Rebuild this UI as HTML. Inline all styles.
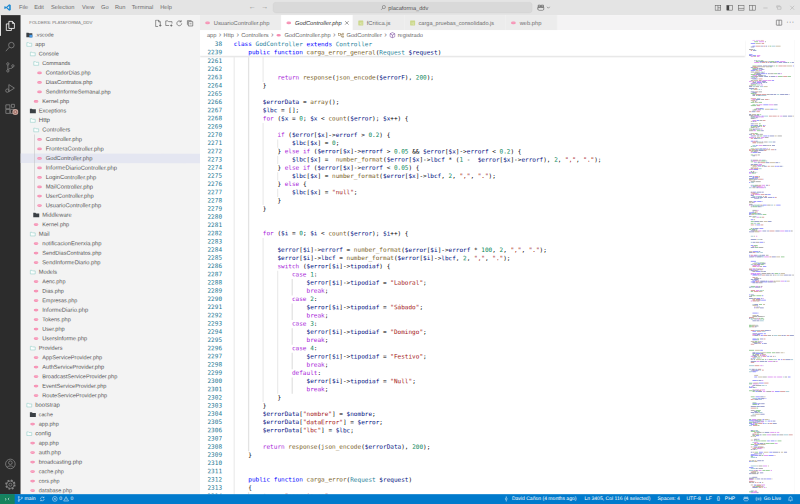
<!DOCTYPE html>
<html lang="en"><head><meta charset="utf-8"><title>GodController.php - placaforma_ddv - Visual Studio Code</title>
<style>
*{box-sizing:border-box}
html,body{margin:0;padding:0;width:800px;height:504px;overflow:hidden;background:#fff}
#root{position:absolute;left:0;top:0;width:1852px;height:1167px;transform:scale(0.43197);text-rendering:geometricPrecision;transform-origin:0 0;font-family:"Liberation Sans",sans-serif;font-size:13px;color:#333;background:#fff;overflow:hidden}
#root div,#root span,#root svg,#root b,#root i{position:absolute}
i{font-style:normal;position:static!important}
#title{left:0;top:0;width:100%;height:35px;background:#e4e4e4}
#title .m{top:9px;font-size:13.2px;color:#6c6c6c}
#cc{left:632px;top:5px;width:600px;height:25px;background:#d9d9d9;border:1px solid #cfcfcf;border-radius:6px}
#act{left:0;top:35px;width:48px;height:1110px;background:#2c2c2c}
#side{left:48px;top:35px;width:415px;height:1110px;background:#f3f3f3}
#side .hd{left:20px;top:12px;font-size:10px;color:#6b6b6b}
#tree{left:0;top:34.8px;width:100%;height:1080px}
.row{position:relative!important;height:21.980px;width:100%;display:block}
.row span{position:static!important;display:inline-block;line-height:22px;vertical-align:top;color:#555;font-size:13px;margin-left:21.800px}
.row .ic{width:16px;height:16px;top:3px}
.row.sel{background:#e4e6f1}
#tabs{left:463px;top:35px;width:1389px;height:35px;background:#f4f3f4}
.tab{top:0;height:35px;background:#ececec;border-right:1px solid #f3f3f3;font-size:13.3px;color:#6e6e6e;line-height:35px;white-space:nowrap}
.tab.act{background:#fff;color:#333;font-style:italic}
.tab .ic{width:16px;height:16px;top:10px;left:10px}
.tab span{left:32px;top:0}
#bc{left:463px;top:70px;width:1389px;height:22px;background:#fff;font-size:13.2px;color:#6a6a6a;line-height:22px;white-space:nowrap}
#bc span{top:0}
#ed{left:463px;top:92px;width:1389px;height:1053px;background:#fff;overflow:hidden;font-family:"DejaVu Sans Mono","Liberation Mono",monospace;font-size:14px}
#lines{left:0;top:41px;width:100%}
.sh{transform:matrix(1,0.00118,0,1,0,-0.45);transform-origin:0 0}
.ln{left:0;height:19px;width:100%;line-height:19px;white-space:pre}
.no{left:0;width:51px;text-align:right;color:#237893}
.tx{left:78px;color:#000}
.g{width:2.3px;background:#e3e3e3}
#sticky{left:0;top:0;width:1262px;height:38px;background:#fff;box-shadow:0 2px 3px -1px #ddd;border-bottom:1px solid #ececec}
.c{color:#008000}.u{color:#9aa0b5}.s{color:#a31515}.v{color:#001080}.n{color:#098658}.k{color:#0000ff}.t{color:#a71bd8}.l{color:#267f99}.f{color:#795e26}
.mm{left:1263px;top:0}
#status{left:0;top:1144px;width:100%;height:23px;background:#007acc;color:#fff;font-size:11.7px;line-height:22px;white-space:nowrap}
#status span{top:0}
#remote{left:0;top:0;width:34px;height:23px;background:#16825d}

#bc em{position:static;font-style:normal;display:inline-block}
#bc em.sep{margin:0 5px 0 5.500px;font-size:18px;color:#777;line-height:18px;position:relative;top:-1px}
#bc .bi{position:static!important;width:15px;height:15px;margin-right:5px}
</style></head>
<body>
<div id="root">
<div id="title"><svg style="left:9px;top:9px" width="17" height="17" viewBox="0 0 16 16"><path d="M11.5 1L5 7 2.2 4.9 1 5.5v5l1.2.6L5 9l6.5 6 3.5-1.5v-11zM11.5 4.8v6.4L7.3 8z" fill="#1f8ad2"/></svg><span class="m" style="left:44px">File</span><span class="m" style="left:79px">Edit</span><span class="m" style="left:118px">Selection</span><span class="m" style="left:190px">View</span><span class="m" style="left:234px">Go</span><span class="m" style="left:266px">Run</span><span class="m" style="left:305px">Terminal</span><span class="m" style="left:371px">Help</span><span class="m" style="left:575px;top:6px;font-size:17px;color:#8c8c8c">←</span><span class="m" style="left:604px;top:6px;font-size:17px;color:#8c8c8c">→</span><div id="cc"><svg style="left:248px;top:5px" width="13" height="13" viewBox="0 0 16 16"><circle cx="9.5" cy="6.5" r="4.5" fill="none" stroke="#555" stroke-width="1.3"/><path d="M6.3 9.7L1.5 14.5" stroke="#555" stroke-width="1.3"/></svg><span style="left:266px;top:4px;font-size:13px;color:#555">placaforma_ddv</span></div><svg style="left:1243px;top:9px" width="18" height="16" viewBox="0 0 18 16"><path d="M3 3h5v4H3zM10 3h5v4h-5zM2 8h14v5l-3 2H5l-3-2z" fill="none" stroke="#444" stroke-width="1.4"/></svg><svg style="left:1265px;top:14px" width="9" height="7" viewBox="0 0 9 7"><path d="M1 1.5l3.5 3.5L8 1.5" fill="none" stroke="#555" stroke-width="1.2"/></svg><svg style="left:1654px;top:10px" width="16" height="16" viewBox="0 0 16 16"><rect x="1.5" y="2.5" width="13" height="11" fill="none" stroke="#555" stroke-width="1.2"/><path d="M8 2.5v11M8 8h6.5" stroke="#555" stroke-width="1.2"/></svg><svg style="left:1681px;top:10px" width="16" height="16" viewBox="0 0 16 16"><rect x="1.5" y="2.5" width="13" height="11" fill="none" stroke="#555" stroke-width="1.2"/><rect x="1.5" y="2.5" width="5.5" height="11" fill="#444"/></svg><svg style="left:1708px;top:10px" width="16" height="16" viewBox="0 0 16 16"><rect x="1.5" y="2.5" width="13" height="11" fill="none" stroke="#555" stroke-width="1.2"/><path d="M1.5 9.5h13" stroke="#555" stroke-width="1.2"/></svg><svg style="left:1734px;top:10px" width="16" height="16" viewBox="0 0 16 16"><rect x="1.5" y="2.5" width="13" height="11" fill="none" stroke="#555" stroke-width="1.2"/><path d="M8 2.5v11" stroke="#555" stroke-width="1.2"/></svg><svg style="left:1764px;top:10px" width="16" height="16" viewBox="0 0 16 16"><path d="M3 8.5h10" stroke="#aaa" stroke-width="1.2"/></svg><svg style="left:1795px;top:10px" width="16" height="16" viewBox="0 0 16 16"><path d="M5 5.5h8v6H5zM3 8V3.5h8" fill="none" stroke="#aaa" stroke-width="1.2"/></svg><svg style="left:1826px;top:10px" width="16" height="16" viewBox="0 0 16 16"><path d="M3.5 3.5l9 9M12.5 3.5l-9 9" stroke="#aaa" stroke-width="1.2"/></svg></div>
<div id="act"><div style="left:0;top:0;width:2px;height:48px;background:#fff"></div><svg style="left:10px;top:11px" width="28" height="28" viewBox="0 0 24 24" fill="none" stroke="#fff" stroke-width="1.6"><path d="M9 3h7l4 4v10H9zM16 3v4h4"/><path d="M9 8H4v13h10v-4"/></svg><svg style="left:10px;top:59px" width="28" height="28" viewBox="0 0 24 24" fill="none" stroke="#858585" stroke-width="1.6"><circle cx="14" cy="9" r="5.5"/><path d="M10 13l-7 8"/></svg><svg style="left:10px;top:107px" width="28" height="28" viewBox="0 0 24 24" fill="none" stroke="#858585" stroke-width="1.6"><circle cx="7" cy="5" r="2.3"/><circle cx="7" cy="19" r="2.3"/><circle cx="17" cy="9" r="2.3"/><path d="M7 7.3v9.4M17 11.3c0 4-10 2-10 5.5"/></svg><svg style="left:10px;top:155px" width="28" height="28" viewBox="0 0 24 24" fill="none" stroke="#858585" stroke-width="1.6"><path d="M9 5l11 7-11 7z"/><circle cx="6" cy="17" r="3.3"/></svg><svg style="left:10px;top:203px" width="28" height="28" viewBox="0 0 24 24" fill="none" stroke="#858585" stroke-width="1.6"><path d="M3 4h8v8H3zM3 13h8v8H3zM12 13h8v8h-8z"/><path d="M14 3h6v6h-6z"/></svg><svg style="left:28px;top:217px" width="15" height="15" viewBox="0 0 15 15"><circle cx="7.5" cy="7.5" r="7" fill="#c9a79f"/><circle cx="7.5" cy="7.5" r="3.5" fill="none" stroke="#7a3b2c" stroke-width="1.2"/></svg><svg style="left:10px;top:1025px" width="28" height="28" viewBox="0 0 24 24" fill="none" stroke="#858585" stroke-width="1.6"><circle cx="12" cy="12" r="9.5"/><circle cx="12" cy="9.5" r="3.6"/><path d="M5.5 19c1-4 12-4 13 0"/></svg><svg style="left:10px;top:1073px" width="28" height="28" viewBox="0 0 24 24" fill="none" stroke="#858585" stroke-width="1.6"><circle cx="12" cy="12" r="3"/><circle cx="12" cy="12" r="8.600" stroke-width="3.400" stroke-dasharray="3.500 3.255"/><circle cx="12" cy="12" r="7.400"/></svg></div>
<div id="side"><span class="hd">FOLDERS: PLATAFORMA_DDV</span><svg style="left:309px;top:9.500px" width="18" height="18" viewBox="0 0 16 16" fill="none" stroke="#454545" stroke-width="1.150"><path d="M3 1.500h6l3.500 3.500v6M9 1.500v3.500h3.500M3 1.500v13h5M10 12.500h5M12.500 10v5"/></svg><svg style="left:334px;top:9.500px" width="18" height="18" viewBox="0 0 16 16" fill="none" stroke="#454545" stroke-width="1.150"><path d="M1.500 3h4.500l1.500 1.500h7v4M1.500 3v9.500h7M10.500 12.500h5M13 10v5"/></svg><svg style="left:358px;top:9.500px" width="18" height="18" viewBox="0 0 16 16" fill="none" stroke="#454545" stroke-width="1.150"><path d="M13 8a5 5 0 1 1-1.500-3.600M12 1.500v3.500H8.500"/></svg><svg style="left:383px;top:9.500px" width="18" height="18" viewBox="0 0 16 16" fill="none" stroke="#454545" stroke-width="1.150"><path d="M4.500 4.500h9v9h-9zM2.500 11V2.500H11M7 9h4"/></svg><div id="tree" class="sh"><div class="row" style="padding-left:12px"><svg class="ic" viewBox="0 0 16 16"><path d="M1 3h5l1.5 1.6H15V13.5H1z" fill="#3b4045"/><rect x="8" y="8" width="7" height="6.5" fill="#4a9be8"/></svg><span style="font-size:12.26px">.vscode</span></div>
<div class="row" style="padding-left:12px"><svg class="ic" viewBox="0 0 16 16"><path d="M2.200 4.200h3.800l1.300 1.400h6.200v7h-11.300z" fill="#fbfefd" stroke="#86c9c2" stroke-width="1.200" stroke-linejoin="round"/></svg><span style="font-size:13.18px">app</span></div>
<div class="row" style="padding-left:20px"><svg class="ic" viewBox="0 0 16 16"><path d="M2.200 4.200h3.800l1.300 1.400h6.200v7h-11.300z" fill="#fbfefd" stroke="#86c9c2" stroke-width="1.200" stroke-linejoin="round"/></svg><span style="font-size:12.62px">Console</span></div>
<div class="row" style="padding-left:28px"><svg class="ic" viewBox="0 0 16 16"><path d="M2.200 4.200h3.800l1.300 1.400h6.200v7h-11.300z" fill="#fbfefd" stroke="#86c9c2" stroke-width="1.200" stroke-linejoin="round"/></svg><span style="font-size:12.68px">Commands</span></div>
<div class="row" style="padding-left:36px"><svg class="ic" viewBox="0 0 16 16"><ellipse cx="7.500" cy="8.200" rx="5.400" ry="3.200" fill="#f68bb0"/><path d="M4.500 8h1.200M7 8h1.500M9.800 8H11" stroke="#fff" stroke-width="1"/></svg><span style="font-size:12.92px">ContadorDias.php</span></div>
<div class="row" style="padding-left:36px"><svg class="ic" viewBox="0 0 16 16"><ellipse cx="7.500" cy="8.200" rx="5.400" ry="3.200" fill="#f68bb0"/><path d="M4.500 8h1.200M7 8h1.500M9.800 8H11" stroke="#fff" stroke-width="1"/></svg><span style="font-size:13.07px">DiasContratos.php</span></div>
<div class="row" style="padding-left:36px"><svg class="ic" viewBox="0 0 16 16"><ellipse cx="7.500" cy="8.200" rx="5.400" ry="3.200" fill="#f68bb0"/><path d="M4.500 8h1.200M7 8h1.500M9.800 8H11" stroke="#fff" stroke-width="1"/></svg><span style="font-size:12.95px">SendInformeSemanal.php</span></div>
<div class="row" style="padding-left:28px"><svg class="ic" viewBox="0 0 16 16"><ellipse cx="7.500" cy="8.200" rx="5.400" ry="3.200" fill="#f68bb0"/><path d="M4.500 8h1.200M7 8h1.500M9.800 8H11" stroke="#fff" stroke-width="1"/></svg><span style="font-size:12.92px">Kernel.php</span></div>
<div class="row" style="padding-left:20px"><svg class="ic" viewBox="0 0 16 16"><path d="M1 3h5l1.5 1.6H15V13.5H1z" fill="#3b4045"/></svg><span style="font-size:13.01px">Exceptions</span></div>
<div class="row" style="padding-left:20px"><svg class="ic" viewBox="0 0 16 16"><path d="M2.200 4.200h3.800l1.300 1.400h6.200v7h-11.300z" fill="#fbfefd" stroke="#86c9c2" stroke-width="1.200" stroke-linejoin="round"/></svg><span style="font-size:14.20px">Http</span></div>
<div class="row" style="padding-left:28px"><svg class="ic" viewBox="0 0 16 16"><path d="M2.200 4.200h3.800l1.300 1.400h6.200v7h-11.300z" fill="#fbfefd" stroke="#86c9c2" stroke-width="1.200" stroke-linejoin="round"/></svg><span style="font-size:13.41px">Controllers</span></div>
<div class="row" style="padding-left:36px"><svg class="ic" viewBox="0 0 16 16"><ellipse cx="7.500" cy="8.200" rx="5.400" ry="3.200" fill="#f68bb0"/><path d="M4.500 8h1.200M7 8h1.500M9.800 8H11" stroke="#fff" stroke-width="1"/></svg><span style="font-size:13.48px">Controller.php</span></div>
<div class="row" style="padding-left:36px"><svg class="ic" viewBox="0 0 16 16"><ellipse cx="7.500" cy="8.200" rx="5.400" ry="3.200" fill="#f68bb0"/><path d="M4.500 8h1.200M7 8h1.500M9.800 8H11" stroke="#fff" stroke-width="1"/></svg><span style="font-size:13.42px">FronteraController.php</span></div>
<div class="row sel" style="padding-left:36px"><svg class="ic" viewBox="0 0 16 16"><ellipse cx="7.500" cy="8.200" rx="5.400" ry="3.200" fill="#f68bb0"/><path d="M4.500 8h1.200M7 8h1.500M9.800 8H11" stroke="#fff" stroke-width="1"/></svg><span style="font-size:13.33px">GodController.php</span></div>
<div class="row" style="padding-left:36px"><svg class="ic" viewBox="0 0 16 16"><ellipse cx="7.500" cy="8.200" rx="5.400" ry="3.200" fill="#f68bb0"/><path d="M4.500 8h1.200M7 8h1.500M9.800 8H11" stroke="#fff" stroke-width="1"/></svg><span style="font-size:13.49px">InformeDiarioController.php</span></div>
<div class="row" style="padding-left:36px"><svg class="ic" viewBox="0 0 16 16"><ellipse cx="7.500" cy="8.200" rx="5.400" ry="3.200" fill="#f68bb0"/><path d="M4.500 8h1.200M7 8h1.500M9.800 8H11" stroke="#fff" stroke-width="1"/></svg><span style="font-size:13.48px">LoginController.php</span></div>
<div class="row" style="padding-left:36px"><svg class="ic" viewBox="0 0 16 16"><ellipse cx="7.500" cy="8.200" rx="5.400" ry="3.200" fill="#f68bb0"/><path d="M4.500 8h1.200M7 8h1.500M9.800 8H11" stroke="#fff" stroke-width="1"/></svg><span style="font-size:13.57px">MailController.php</span></div>
<div class="row" style="padding-left:36px"><svg class="ic" viewBox="0 0 16 16"><ellipse cx="7.500" cy="8.200" rx="5.400" ry="3.200" fill="#f68bb0"/><path d="M4.500 8h1.200M7 8h1.500M9.800 8H11" stroke="#fff" stroke-width="1"/></svg><span style="font-size:13.33px">UserController.php</span></div>
<div class="row" style="padding-left:36px"><svg class="ic" viewBox="0 0 16 16"><ellipse cx="7.500" cy="8.200" rx="5.400" ry="3.200" fill="#f68bb0"/><path d="M4.500 8h1.200M7 8h1.500M9.800 8H11" stroke="#fff" stroke-width="1"/></svg><span style="font-size:13.28px">UsuarioController.php</span></div>
<div class="row" style="padding-left:28px"><svg class="ic" viewBox="0 0 16 16"><path d="M1 3h5l1.5 1.6H15V13.5H1z" fill="#3b4045"/></svg><span style="font-size:13.36px">Middleware</span></div>
<div class="row" style="padding-left:28px"><svg class="ic" viewBox="0 0 16 16"><ellipse cx="7.500" cy="8.200" rx="5.400" ry="3.200" fill="#f68bb0"/><path d="M4.500 8h1.200M7 8h1.500M9.800 8H11" stroke="#fff" stroke-width="1"/></svg><span style="font-size:12.92px">Kernel.php</span></div>
<div class="row" style="padding-left:20px"><svg class="ic" viewBox="0 0 16 16"><path d="M2.200 4.200h3.800l1.300 1.400h6.200v7h-11.300z" fill="#fbfefd" stroke="#86c9c2" stroke-width="1.200" stroke-linejoin="round"/></svg><span style="font-size:13.57px">Mail</span></div>
<div class="row" style="padding-left:28px"><svg class="ic" viewBox="0 0 16 16"><ellipse cx="7.500" cy="8.200" rx="5.400" ry="3.200" fill="#f68bb0"/><path d="M4.500 8h1.200M7 8h1.500M9.800 8H11" stroke="#fff" stroke-width="1"/></svg><span style="font-size:13.27px">notificacionEnerxia.php</span></div>
<div class="row" style="padding-left:28px"><svg class="ic" viewBox="0 0 16 16"><ellipse cx="7.500" cy="8.200" rx="5.400" ry="3.200" fill="#f68bb0"/><path d="M4.500 8h1.200M7 8h1.500M9.800 8H11" stroke="#fff" stroke-width="1"/></svg><span style="font-size:12.92px">SendDiasContratos.php</span></div>
<div class="row" style="padding-left:28px"><svg class="ic" viewBox="0 0 16 16"><ellipse cx="7.500" cy="8.200" rx="5.400" ry="3.200" fill="#f68bb0"/><path d="M4.500 8h1.200M7 8h1.500M9.800 8H11" stroke="#fff" stroke-width="1"/></svg><span style="font-size:13.11px">SendInformeDiario.php</span></div>
<div class="row" style="padding-left:20px"><svg class="ic" viewBox="0 0 16 16"><path d="M2.200 4.200h3.800l1.300 1.400h6.200v7h-11.300z" fill="#fbfefd" stroke="#86c9c2" stroke-width="1.200" stroke-linejoin="round"/></svg><span style="font-size:13.11px">Models</span></div>
<div class="row" style="padding-left:28px"><svg class="ic" viewBox="0 0 16 16"><ellipse cx="7.500" cy="8.200" rx="5.400" ry="3.200" fill="#f68bb0"/><path d="M4.500 8h1.200M7 8h1.500M9.800 8H11" stroke="#fff" stroke-width="1"/></svg><span style="font-size:12.74px">Aenc.php</span></div>
<div class="row" style="padding-left:28px"><svg class="ic" viewBox="0 0 16 16"><ellipse cx="7.500" cy="8.200" rx="5.400" ry="3.200" fill="#f68bb0"/><path d="M4.500 8h1.200M7 8h1.500M9.800 8H11" stroke="#fff" stroke-width="1"/></svg><span style="font-size:12.61px">Dias.php</span></div>
<div class="row" style="padding-left:28px"><svg class="ic" viewBox="0 0 16 16"><ellipse cx="7.500" cy="8.200" rx="5.400" ry="3.200" fill="#f68bb0"/><path d="M4.500 8h1.200M7 8h1.500M9.800 8H11" stroke="#fff" stroke-width="1"/></svg><span style="font-size:12.57px">Empresas.php</span></div>
<div class="row" style="padding-left:28px"><svg class="ic" viewBox="0 0 16 16"><ellipse cx="7.500" cy="8.200" rx="5.400" ry="3.200" fill="#f68bb0"/><path d="M4.500 8h1.200M7 8h1.500M9.800 8H11" stroke="#fff" stroke-width="1"/></svg><span style="font-size:13.40px">InformeDiario.php</span></div>
<div class="row" style="padding-left:28px"><svg class="ic" viewBox="0 0 16 16"><ellipse cx="7.500" cy="8.200" rx="5.400" ry="3.200" fill="#f68bb0"/><path d="M4.500 8h1.200M7 8h1.500M9.800 8H11" stroke="#fff" stroke-width="1"/></svg><span style="font-size:12.90px">Tokens.php</span></div>
<div class="row" style="padding-left:28px"><svg class="ic" viewBox="0 0 16 16"><ellipse cx="7.500" cy="8.200" rx="5.400" ry="3.200" fill="#f68bb0"/><path d="M4.500 8h1.200M7 8h1.500M9.800 8H11" stroke="#fff" stroke-width="1"/></svg><span style="font-size:13.01px">User.php</span></div>
<div class="row" style="padding-left:28px"><svg class="ic" viewBox="0 0 16 16"><ellipse cx="7.500" cy="8.200" rx="5.400" ry="3.200" fill="#f68bb0"/><path d="M4.500 8h1.200M7 8h1.500M9.800 8H11" stroke="#fff" stroke-width="1"/></svg><span style="font-size:13.11px">UsersInforme.php</span></div>
<div class="row" style="padding-left:20px"><svg class="ic" viewBox="0 0 16 16"><path d="M2.200 4.200h3.800l1.300 1.400h6.200v7h-11.300z" fill="#fbfefd" stroke="#86c9c2" stroke-width="1.200" stroke-linejoin="round"/></svg><span style="font-size:13.02px">Providers</span></div>
<div class="row" style="padding-left:28px"><svg class="ic" viewBox="0 0 16 16"><ellipse cx="7.500" cy="8.200" rx="5.400" ry="3.200" fill="#f68bb0"/><path d="M4.500 8h1.200M7 8h1.500M9.800 8H11" stroke="#fff" stroke-width="1"/></svg><span style="font-size:12.95px">AppServiceProvider.php</span></div>
<div class="row" style="padding-left:28px"><svg class="ic" viewBox="0 0 16 16"><ellipse cx="7.500" cy="8.200" rx="5.400" ry="3.200" fill="#f68bb0"/><path d="M4.500 8h1.200M7 8h1.500M9.800 8H11" stroke="#fff" stroke-width="1"/></svg><span style="font-size:13.04px">AuthServiceProvider.php</span></div>
<div class="row" style="padding-left:28px"><svg class="ic" viewBox="0 0 16 16"><ellipse cx="7.500" cy="8.200" rx="5.400" ry="3.200" fill="#f68bb0"/><path d="M4.500 8h1.200M7 8h1.500M9.800 8H11" stroke="#fff" stroke-width="1"/></svg><span style="font-size:12.91px">BroadcastServiceProvider.php</span></div>
<div class="row" style="padding-left:28px"><svg class="ic" viewBox="0 0 16 16"><ellipse cx="7.500" cy="8.200" rx="5.400" ry="3.200" fill="#f68bb0"/><path d="M4.500 8h1.200M7 8h1.500M9.800 8H11" stroke="#fff" stroke-width="1"/></svg><span style="font-size:12.93px">EventServiceProvider.php</span></div>
<div class="row" style="padding-left:28px"><svg class="ic" viewBox="0 0 16 16"><ellipse cx="7.500" cy="8.200" rx="5.400" ry="3.200" fill="#f68bb0"/><path d="M4.500 8h1.200M7 8h1.500M9.800 8H11" stroke="#fff" stroke-width="1"/></svg><span style="font-size:12.95px">RouteServiceProvider.php</span></div>
<div class="row" style="padding-left:12px"><svg class="ic" viewBox="0 0 16 16"><path d="M2.200 4.200h3.800l1.300 1.400h6.200v7h-11.300z" fill="#fbfefd" stroke="#86c9c2" stroke-width="1.200" stroke-linejoin="round"/></svg><span style="font-size:13.60px">bootstrap</span></div>
<div class="row" style="padding-left:20px"><svg class="ic" viewBox="0 0 16 16"><path d="M1 3h5l1.5 1.6H15V13.5H1z" fill="#3b4045"/></svg><span style="font-size:12.20px">cache</span></div>
<div class="row" style="padding-left:20px"><svg class="ic" viewBox="0 0 16 16"><ellipse cx="7.500" cy="8.200" rx="5.400" ry="3.200" fill="#f68bb0"/><path d="M4.500 8h1.200M7 8h1.500M9.800 8H11" stroke="#fff" stroke-width="1"/></svg><span style="font-size:12.81px">app.php</span></div>
<div class="row" style="padding-left:12px"><svg class="ic" viewBox="0 0 16 16"><path d="M2.200 4.200h3.800l1.300 1.400h6.200v7h-11.300z" fill="#fbfefd" stroke="#86c9c2" stroke-width="1.200" stroke-linejoin="round"/></svg><span style="font-size:13.66px">config</span></div>
<div class="row" style="padding-left:20px"><svg class="ic" viewBox="0 0 16 16"><ellipse cx="7.500" cy="8.200" rx="5.400" ry="3.200" fill="#f68bb0"/><path d="M4.500 8h1.200M7 8h1.500M9.800 8H11" stroke="#fff" stroke-width="1"/></svg><span style="font-size:12.81px">app.php</span></div>
<div class="row" style="padding-left:20px"><svg class="ic" viewBox="0 0 16 16"><ellipse cx="7.500" cy="8.200" rx="5.400" ry="3.200" fill="#f68bb0"/><path d="M4.500 8h1.200M7 8h1.500M9.800 8H11" stroke="#fff" stroke-width="1"/></svg><span style="font-size:13.08px">auth.php</span></div>
<div class="row" style="padding-left:20px"><svg class="ic" viewBox="0 0 16 16"><ellipse cx="7.500" cy="8.200" rx="5.400" ry="3.200" fill="#f68bb0"/><path d="M4.500 8h1.200M7 8h1.500M9.800 8H11" stroke="#fff" stroke-width="1"/></svg><span style="font-size:13.05px">broadcasting.php</span></div>
<div class="row" style="padding-left:20px"><svg class="ic" viewBox="0 0 16 16"><ellipse cx="7.500" cy="8.200" rx="5.400" ry="3.200" fill="#f68bb0"/><path d="M4.500 8h1.200M7 8h1.500M9.800 8H11" stroke="#fff" stroke-width="1"/></svg><span style="font-size:12.54px">cache.php</span></div>
<div class="row" style="padding-left:20px"><svg class="ic" viewBox="0 0 16 16"><ellipse cx="7.500" cy="8.200" rx="5.400" ry="3.200" fill="#f68bb0"/><path d="M4.500 8h1.200M7 8h1.500M9.800 8H11" stroke="#fff" stroke-width="1"/></svg><span style="font-size:12.52px">cors.php</span></div>
<div class="row" style="padding-left:20px"><svg class="ic" viewBox="0 0 16 16"><ellipse cx="7.500" cy="8.200" rx="5.400" ry="3.200" fill="#f68bb0"/><path d="M4.500 8h1.200M7 8h1.500M9.800 8H11" stroke="#fff" stroke-width="1"/></svg><span style="font-size:12.70px">database.php</span></div>
<div class="row" style="padding-left:20px"><svg class="ic" viewBox="0 0 16 16"><ellipse cx="7.500" cy="8.200" rx="5.400" ry="3.200" fill="#f68bb0"/><path d="M4.500 8h1.200M7 8h1.500M9.800 8H11" stroke="#fff" stroke-width="1"/></svg><span style="font-size:13.00px">filesystems.php</span></div><div style="left:30.800px;top:241.8px;width:1.200px;height:175.8px;background:#b4b4b4"></div></div></div>
<div id="tabs"><div class="tab" style="left:0px;width:188px"><svg class="ic" viewBox="0 0 16 16"><ellipse cx="7.500" cy="8.200" rx="5.400" ry="3.200" fill="#f68bb0"/><path d="M4.500 8h1.200M7 8h1.500M9.800 8H11" stroke="#fff" stroke-width="1"/></svg><span>UsuarioController.php</span></div><div class="tab act" style="left:188px;width:166px"><svg class="ic" viewBox="0 0 16 16"><ellipse cx="7.500" cy="8.200" rx="5.400" ry="3.200" fill="#f68bb0"/><path d="M4.500 8h1.200M7 8h1.500M9.800 8H11" stroke="#fff" stroke-width="1"/></svg><span>GodController.php</span><svg style="left:145px;top:11px" width="14" height="14" viewBox="0 0 14 14"><path d="M3 3l8 8M11 3l-8 8" stroke="#444" stroke-width="1.2"/></svg></div><div class="tab" style="left:354px;width:120px"><svg class="ic" viewBox="0 0 16 16"><rect x="2.500" y="2.500" width="11.500" height="11.500" rx="1" fill="#cbd78a"/><path d="M7 7v4.500M9.500 8h2.500M9.500 11h2.500" stroke="#f7f9e6" stroke-width="1.200"/></svg><span>fCritica.js</span></div><div class="tab" style="left:474px;width:234px"><svg class="ic" viewBox="0 0 16 16"><rect x="2.500" y="2.500" width="11.500" height="11.500" rx="1" fill="#cbd78a"/><path d="M7 7v4.500M9.500 8h2.500M9.500 11h2.500" stroke="#f7f9e6" stroke-width="1.200"/></svg><span style="font-size:12.900px">carga_pruebas_consolidado.js</span></div><div class="tab" style="left:708px;width:119px"><svg class="ic" viewBox="0 0 16 16"><ellipse cx="7.500" cy="8.200" rx="5.400" ry="3.200" fill="#f68bb0"/><path d="M4.500 8h1.200M7 8h1.500M9.800 8H11" stroke="#fff" stroke-width="1"/></svg><span>web.php</span></div><svg style="left:1332px;top:9px" width="17" height="17" viewBox="0 0 16 16"><rect x="2" y="2.500" width="12" height="11" rx="1" fill="none" stroke="#444" stroke-width="1.200"/><path d="M8 2.500v11" stroke="#444" stroke-width="1.200"/></svg><span style="left:1357px;top:8px;font-size:16px;color:#444;letter-spacing:1px;line-height:16px">···</span></div>
<div id="bc"><div style="left:16px;top:0;display:flex;align-items:center;height:22px;position:absolute"><em>app</em><em class="sep">›</em><em>Http</em><em class="sep">›</em><em>Controllers</em><em class="sep">›</em><svg class="bi" viewBox="0 0 16 16"><ellipse cx="7.500" cy="8.200" rx="5.400" ry="3.200" fill="#f68bb0"/></svg><em>GodController.php</em><em class="sep">›</em><svg class="bi" viewBox="0 0 16 16" fill="none" stroke="#8a6d3b" stroke-width="1.2"><rect x="1.500" y="4" width="5" height="5"/><path d="M6.500 6.500h4M10.500 3.500h4v3h-4zM10.500 10h4v3h-4zM8.500 6.500v5h2"/></svg><em>GodController</em><em class="sep">›</em><svg class="bi" viewBox="0 0 16 16" fill="none" stroke="#652d90" stroke-width="1.2"><path d="M8 1.500l6 3v7l-6 3-6-3v-7zM2 4.500l6 3 6-3M8 7.500v7"/></svg><em>registrado</em></div></div>
<div id="ed"><div id="lines" class="sh"><div class="ln" style="top:0px"><span class="no">2261</span><span class="tx"></span></div>
<div class="ln" style="top:19px"><span class="no">2262</span><span class="tx"></span></div>
<div class="ln" style="top:38px"><span class="no">2263</span><span class="tx">            <i class="t">return</i> <i class="f">response</i>(<i class="f">json_encode</i>(<i class="v">$errorF</i>), <i class="n">200</i>);</span></div>
<div class="ln" style="top:57px"><span class="no">2264</span><span class="tx">        }</span></div>
<div class="ln" style="top:76px"><span class="no">2265</span><span class="tx"></span></div>
<div class="ln" style="top:95px"><span class="no">2266</span><span class="tx">        <i class="v">$errorData</i> = <i class="f">array</i>();</span></div>
<div class="ln" style="top:114px"><span class="no">2267</span><span class="tx">        <i class="v">$lbc</i> = [];</span></div>
<div class="ln" style="top:133px"><span class="no">2268</span><span class="tx">        <i class="t">for</i> (<i class="v">$x</i> = <i class="n">0</i>; <i class="v">$x</i> &lt; <i class="f">count</i>(<i class="v">$error</i>); <i class="v">$x</i>++) {</span></div>
<div class="ln" style="top:152px"><span class="no">2269</span><span class="tx"></span></div>
<div class="ln" style="top:171px"><span class="no">2270</span><span class="tx">            <i class="t">if</i> (<i class="v">$error</i>[<i class="v">$x</i>]-&gt;<i class="v">errorf</i> &gt; <i class="n">0.2</i>) {</span></div>
<div class="ln" style="top:190px"><span class="no">2271</span><span class="tx">                <i class="v">$lbc</i>[<i class="v">$x</i>] = <i class="n">0</i>;</span></div>
<div class="ln" style="top:209px"><span class="no">2272</span><span class="tx">            } <i class="t">else</i> <i class="t">if</i> (<i class="v">$error</i>[<i class="v">$x</i>]-&gt;<i class="v">errorf</i> &gt; <i class="n">0.05</i> &amp;&amp; <i class="v">$error</i>[<i class="v">$x</i>]-&gt;<i class="v">errorf</i> &lt; <i class="n">0.2</i>) {</span></div>
<div class="ln" style="top:228px"><span class="no">2273</span><span class="tx">                <i class="v">$lbc</i>[<i class="v">$x</i>] =  <i class="f">number_format</i>(<i class="v">$error</i>[<i class="v">$x</i>]-&gt;<i class="v">lbcf</i> * (<i class="n">1</i> -  <i class="v">$error</i>[<i class="v">$x</i>]-&gt;<i class="v">errorf</i>), <i class="n">2</i>, <i class="s">","</i>, <i class="s">"."</i>);</span></div>
<div class="ln" style="top:247px"><span class="no">2274</span><span class="tx">            } <i class="t">else</i> <i class="t">if</i> (<i class="v">$error</i>[<i class="v">$x</i>]-&gt;<i class="v">errorf</i> &lt; <i class="n">0.05</i>) {</span></div>
<div class="ln" style="top:266px"><span class="no">2275</span><span class="tx">                <i class="v">$lbc</i>[<i class="v">$x</i>] = <i class="f">number_format</i>(<i class="v">$error</i>[<i class="v">$x</i>]-&gt;<i class="v">lbcf</i>, <i class="n">2</i>, <i class="s">","</i>, <i class="s">"."</i>);</span></div>
<div class="ln" style="top:285px"><span class="no">2276</span><span class="tx">            } <i class="t">else</i> {</span></div>
<div class="ln" style="top:304px"><span class="no">2277</span><span class="tx">                <i class="v">$lbc</i>[<i class="v">$x</i>] = <i class="s">"null"</i>;</span></div>
<div class="ln" style="top:323px"><span class="no">2278</span><span class="tx">            }</span></div>
<div class="ln" style="top:342px"><span class="no">2279</span><span class="tx">        }</span></div>
<div class="ln" style="top:361px"><span class="no">2280</span><span class="tx"></span></div>
<div class="ln" style="top:380px"><span class="no">2281</span><span class="tx"></span></div>
<div class="ln" style="top:399px"><span class="no">2282</span><span class="tx">        <i class="t">for</i> (<i class="v">$i</i> = <i class="n">0</i>; <i class="v">$i</i> &lt; <i class="f">count</i>(<i class="v">$error</i>); <i class="v">$i</i>++) {</span></div>
<div class="ln" style="top:418px"><span class="no">2283</span><span class="tx"></span></div>
<div class="ln" style="top:437px"><span class="no">2284</span><span class="tx">            <i class="v">$error</i>[<i class="v">$i</i>]-&gt;<i class="v">errorf</i> = <i class="f">number_format</i>(<i class="v">$error</i>[<i class="v">$i</i>]-&gt;<i class="v">errorf</i> * <i class="n">100</i>, <i class="n">2</i>, <i class="s">","</i>, <i class="s">"."</i>);</span></div>
<div class="ln" style="top:456px"><span class="no">2285</span><span class="tx">            <i class="v">$error</i>[<i class="v">$i</i>]-&gt;<i class="v">lbcf</i> = <i class="f">number_format</i>(<i class="v">$error</i>[<i class="v">$i</i>]-&gt;<i class="v">lbcf</i>, <i class="n">2</i>, <i class="s">","</i>, <i class="s">"."</i>);</span></div>
<div class="ln" style="top:475px"><span class="no">2286</span><span class="tx">            <i class="t">switch</i> (<i class="v">$error</i>[<i class="v">$i</i>]-&gt;<i class="v">tipodiaf</i>) {</span></div>
<div class="ln" style="top:494px"><span class="no">2287</span><span class="tx">                <i class="t">case</i> <i class="n">1</i>:</span></div>
<div class="ln" style="top:513px"><span class="no">2288</span><span class="tx">                    <i class="v">$error</i>[<i class="v">$i</i>]-&gt;<i class="v">tipodiaf</i> = <i class="s">"Laboral"</i>;</span></div>
<div class="ln" style="top:532px"><span class="no">2289</span><span class="tx">                    <i class="t">break</i>;</span></div>
<div class="ln" style="top:551px"><span class="no">2290</span><span class="tx">                <i class="t">case</i> <i class="n">2</i>:</span></div>
<div class="ln" style="top:570px"><span class="no">2291</span><span class="tx">                    <i class="v">$error</i>[<i class="v">$i</i>]-&gt;<i class="v">tipodiaf</i> = <i class="s">"Sábado"</i>;</span></div>
<div class="ln" style="top:589px"><span class="no">2292</span><span class="tx">                    <i class="t">break</i>;</span></div>
<div class="ln" style="top:608px"><span class="no">2293</span><span class="tx">                <i class="t">case</i> <i class="n">3</i>:</span></div>
<div class="ln" style="top:627px"><span class="no">2294</span><span class="tx">                    <i class="v">$error</i>[<i class="v">$i</i>]-&gt;<i class="v">tipodiaf</i> = <i class="s">"Domingo"</i>;</span></div>
<div class="ln" style="top:646px"><span class="no">2295</span><span class="tx">                    <i class="t">break</i>;</span></div>
<div class="ln" style="top:665px"><span class="no">2296</span><span class="tx">                <i class="t">case</i> <i class="n">4</i>:</span></div>
<div class="ln" style="top:684px"><span class="no">2297</span><span class="tx">                    <i class="v">$error</i>[<i class="v">$i</i>]-&gt;<i class="v">tipodiaf</i> = <i class="s">"Festivo"</i>;</span></div>
<div class="ln" style="top:703px"><span class="no">2298</span><span class="tx">                    <i class="t">break</i>;</span></div>
<div class="ln" style="top:722px"><span class="no">2299</span><span class="tx">                <i class="t">default</i>:</span></div>
<div class="ln" style="top:741px"><span class="no">2300</span><span class="tx">                    <i class="v">$error</i>[<i class="v">$i</i>]-&gt;<i class="v">tipodiaf</i> = <i class="s">"Null"</i>;</span></div>
<div class="ln" style="top:760px"><span class="no">2301</span><span class="tx">                    <i class="t">break</i>;</span></div>
<div class="ln" style="top:779px"><span class="no">2302</span><span class="tx">            }</span></div>
<div class="ln" style="top:798px"><span class="no">2303</span><span class="tx">        }</span></div>
<div class="ln" style="top:817px"><span class="no">2304</span><span class="tx">        <i class="v">$errorData</i>[<i class="s">"nombre"</i>] = <i class="v">$nombre</i>;</span></div>
<div class="ln" style="top:836px"><span class="no">2305</span><span class="tx">        <i class="v">$errorData</i>[<i class="s">"dataError"</i>] = <i class="v">$error</i>;</span></div>
<div class="ln" style="top:855px"><span class="no">2306</span><span class="tx">        <i class="v">$errorData</i>[<i class="s">"lbc"</i>] = <i class="v">$lbc</i>;</span></div>
<div class="ln" style="top:874px"><span class="no">2307</span><span class="tx"></span></div>
<div class="ln" style="top:893px"><span class="no">2308</span><span class="tx">        <i class="t">return</i> <i class="f">response</i>(<i class="f">json_encode</i>(<i class="v">$errorData</i>), <i class="n">200</i>);</span></div>
<div class="ln" style="top:912px"><span class="no">2309</span><span class="tx">    }</span></div>
<div class="ln" style="top:931px"><span class="no">2310</span><span class="tx"></span></div>
<div class="ln" style="top:950px"><span class="no">2311</span><span class="tx"></span></div>
<div class="ln" style="top:969px"><span class="no">2312</span><span class="tx">    <i class="k">public</i> <i class="k">function</i> <i class="f">carga_error</i>(<i class="l">Request</i> <i class="v">$request</i>)</span></div>
<div class="ln" style="top:988px"><span class="no">2313</span><span class="tx">    {</span></div>
<div class="ln" style="top:1007px"><span class="no">2314</span><span class="tx">        <i class="u">$ep</i> = <i class="s">"energia_sp"</i>;</span></div>
<b class="g" style="left:77.50px;top:0px;height:1026px"></b>
<b class="g" style="left:111.21px;top:0px;height:912px"></b>
<b class="g" style="left:111.21px;top:1007px;height:19px"></b>
<b class="g" style="left:144.93px;top:0px;height:57px"></b>
<b class="g" style="left:144.93px;top:152px;height:190px"></b>
<b class="g" style="left:144.93px;top:418px;height:380px"></b>
<b class="g" style="left:178.64px;top:190px;height:19px"></b>
<b class="g" style="left:178.64px;top:228px;height:19px"></b>
<b class="g" style="left:178.64px;top:266px;height:19px"></b>
<b class="g" style="left:178.64px;top:304px;height:19px"></b>
<b class="g" style="left:178.64px;top:494px;height:285px"></b>
<b class="g" style="left:212.36px;top:513px;height:38px"></b>
<b class="g" style="left:212.36px;top:570px;height:38px"></b>
<b class="g" style="left:212.36px;top:627px;height:38px"></b>
<b class="g" style="left:212.36px;top:684px;height:38px"></b>
<b class="g" style="left:212.36px;top:741px;height:38px"></b></div><svg class="mm" width="112" height="1053" viewBox="0 0 112 1053" opacity=".58"><rect x="16" y="0" width="6" height="1.5" fill="#af00db"/><rect x="24" y="0" width="10" height="1.5" fill="#af00db"/><rect x="35" y="0" width="7" height="1.5" fill="#a31515"/><rect x="20" y="4" width="9" height="1.5" fill="#008000"/><rect x="31" y="4" width="12" height="1.5" fill="#af00db"/><rect x="45" y="4" width="2" height="1.5" fill="#333"/><rect x="12" y="8" width="10" height="1.5" fill="#0000ff"/><rect x="23" y="8" width="12" height="1.5" fill="#795e26"/><rect x="37" y="8" width="6" height="1.5" fill="#a31515"/><rect x="16" y="14" width="7" height="1.5" fill="#0000ff"/><rect x="24" y="14" width="11" height="1.5" fill="#a31515"/><rect x="36" y="14" width="4" height="1.5" fill="#001080"/><rect x="41" y="14" width="4" height="1.5" fill="#a31515"/><rect x="46" y="14" width="4" height="1.5" fill="#001080"/><rect x="52" y="14" width="3" height="1.5" fill="#795e26"/><rect x="56" y="14" width="3" height="1.5" fill="#008000"/><rect x="60" y="14" width="9" height="1.5" fill="#267f99"/><rect x="70" y="14" width="11" height="1.5" fill="#795e26"/><rect x="12" y="16" width="8" height="1.5" fill="#001080"/><rect x="8" y="22" width="10" height="1.5" fill="#333"/><rect x="19" y="22" width="3" height="1.5" fill="#267f99"/><rect x="12" y="24" width="3" height="1.5" fill="#a31515"/><rect x="17" y="24" width="7" height="1.5" fill="#001080"/><rect x="25" y="24" width="1" height="1.5" fill="#267f99"/><rect x="8" y="34" width="8" height="1.5" fill="#0000ff"/><rect x="8" y="36" width="6" height="1.5" fill="#001080"/><rect x="16" y="36" width="8" height="1.5" fill="#0000ff"/><rect x="26" y="36" width="8" height="1.5" fill="#af00db"/><rect x="12" y="38" width="5" height="1.5" fill="#af00db"/><rect x="18" y="38" width="6" height="1.5" fill="#795e26"/><rect x="26" y="38" width="6" height="1.5" fill="#af00db"/><rect x="20" y="48" width="3" height="1.5" fill="#001080"/><rect x="24" y="48" width="3" height="1.5" fill="#333"/><rect x="28" y="48" width="6" height="1.5" fill="#267f99"/><rect x="35" y="48" width="6" height="1.5" fill="#008000"/><rect x="24" y="50" width="6" height="1.5" fill="#008000"/><rect x="32" y="50" width="12" height="1.5" fill="#001080"/><rect x="45" y="50" width="6" height="1.5" fill="#795e26"/><rect x="53" y="50" width="3" height="1.5" fill="#001080"/><rect x="57" y="50" width="9" height="1.5" fill="#008000"/><rect x="67" y="50" width="3" height="1.5" fill="#001080"/><rect x="71" y="50" width="7" height="1.5" fill="#0000ff"/><rect x="80" y="50" width="12" height="1.5" fill="#af00db"/><rect x="20" y="52" width="12" height="1.5" fill="#af00db"/><rect x="34" y="52" width="3" height="1.5" fill="#001080"/><rect x="38" y="52" width="8" height="1.5" fill="#a31515"/><rect x="47" y="52" width="3" height="1.5" fill="#001080"/><rect x="51" y="52" width="4" height="1.5" fill="#a31515"/><rect x="56" y="52" width="5" height="1.5" fill="#001080"/><rect x="62" y="52" width="10" height="1.5" fill="#333"/><rect x="73" y="52" width="3" height="1.5" fill="#af00db"/><rect x="77" y="52" width="8" height="1.5" fill="#001080"/><rect x="87" y="52" width="10" height="1.5" fill="#001080"/><rect x="98" y="52" width="3" height="1.5" fill="#008000"/><rect x="103" y="52" width="3" height="1.5" fill="#267f99"/><rect x="107" y="52" width="6" height="1.5" fill="#001080"/><rect x="16" y="60" width="10" height="1.5" fill="#008000"/><rect x="27" y="60" width="11" height="1.5" fill="#001080"/><rect x="40" y="60" width="11" height="1.5" fill="#001080"/><rect x="52" y="60" width="12" height="1.5" fill="#001080"/><rect x="65" y="60" width="3" height="1.5" fill="#795e26"/><rect x="70" y="60" width="4" height="1.5" fill="#008000"/><rect x="76" y="60" width="10" height="1.5" fill="#a31515"/><rect x="87" y="60" width="8" height="1.5" fill="#a31515"/><rect x="96" y="60" width="12" height="1.5" fill="#795e26"/><rect x="110" y="60" width="3" height="1.5" fill="#0000ff"/><rect x="16" y="62" width="9" height="1.5" fill="#a31515"/><rect x="26" y="62" width="9" height="1.5" fill="#795e26"/><rect x="36" y="62" width="9" height="1.5" fill="#795e26"/><rect x="47" y="62" width="8" height="1.5" fill="#795e26"/><rect x="56" y="62" width="5" height="1.5" fill="#008000"/><rect x="12" y="64" width="5" height="1.5" fill="#001080"/><rect x="18" y="64" width="10" height="1.5" fill="#a31515"/><rect x="16" y="66" width="8" height="1.5" fill="#008000"/><rect x="25" y="66" width="4" height="1.5" fill="#001080"/><rect x="30" y="66" width="9" height="1.5" fill="#001080"/><rect x="16" y="68" width="12" height="1.5" fill="#001080"/><rect x="30" y="68" width="5" height="1.5" fill="#267f99"/><rect x="36" y="68" width="6" height="1.5" fill="#001080"/><rect x="43" y="68" width="1" height="1.5" fill="#af00db"/><rect x="12" y="70" width="11" height="1.5" fill="#0000ff"/><rect x="24" y="70" width="6" height="1.5" fill="#795e26"/><rect x="31" y="70" width="7" height="1.5" fill="#af00db"/><rect x="12" y="74" width="8" height="1.5" fill="#333"/><rect x="22" y="74" width="11" height="1.5" fill="#333"/><rect x="35" y="74" width="5" height="1.5" fill="#267f99"/><rect x="42" y="74" width="2" height="1.5" fill="#001080"/><rect x="20" y="76" width="10" height="1.5" fill="#795e26"/><rect x="32" y="76" width="3" height="1.5" fill="#267f99"/><rect x="37" y="76" width="5" height="1.5" fill="#333"/><rect x="20" y="78" width="4" height="1.5" fill="#795e26"/><rect x="25" y="78" width="9" height="1.5" fill="#001080"/><rect x="35" y="78" width="11" height="1.5" fill="#0000ff"/><rect x="47" y="78" width="3" height="1.5" fill="#0000ff"/><rect x="52" y="78" width="4" height="1.5" fill="#001080"/><rect x="57" y="78" width="8" height="1.5" fill="#333"/><rect x="66" y="78" width="7" height="1.5" fill="#008000"/><rect x="74" y="78" width="6" height="1.5" fill="#001080"/><rect x="81" y="78" width="3" height="1.5" fill="#af00db"/><rect x="12" y="80" width="11" height="1.5" fill="#008000"/><rect x="24" y="80" width="12" height="1.5" fill="#001080"/><rect x="16" y="82" width="11" height="1.5" fill="#af00db"/><rect x="29" y="82" width="11" height="1.5" fill="#333"/><rect x="41" y="82" width="6" height="1.5" fill="#267f99"/><rect x="12" y="84" width="7" height="1.5" fill="#008000"/><rect x="20" y="84" width="9" height="1.5" fill="#333"/><rect x="30" y="84" width="11" height="1.5" fill="#001080"/><rect x="43" y="84" width="9" height="1.5" fill="#001080"/><rect x="54" y="84" width="3" height="1.5" fill="#333"/><rect x="58" y="84" width="11" height="1.5" fill="#001080"/><rect x="70" y="84" width="4" height="1.5" fill="#af00db"/><rect x="75" y="84" width="11" height="1.5" fill="#008000"/><rect x="87" y="84" width="9" height="1.5" fill="#a31515"/><rect x="97" y="84" width="8" height="1.5" fill="#008000"/><rect x="16" y="86" width="6" height="1.5" fill="#267f99"/><rect x="24" y="86" width="3" height="1.5" fill="#a31515"/><rect x="12" y="88" width="6" height="1.5" fill="#001080"/><rect x="20" y="88" width="4" height="1.5" fill="#0000ff"/><rect x="16" y="90" width="12" height="1.5" fill="#001080"/><rect x="30" y="90" width="9" height="1.5" fill="#a31515"/><rect x="12" y="94" width="5" height="1.5" fill="#333"/><rect x="18" y="94" width="11" height="1.5" fill="#795e26"/><rect x="31" y="94" width="6" height="1.5" fill="#333"/><rect x="39" y="94" width="12" height="1.5" fill="#af00db"/><rect x="52" y="94" width="8" height="1.5" fill="#af00db"/><rect x="61" y="94" width="5" height="1.5" fill="#0000ff"/><rect x="8" y="96" width="6" height="1.5" fill="#af00db"/><rect x="16" y="96" width="4" height="1.5" fill="#a31515"/><rect x="21" y="96" width="4" height="1.5" fill="#267f99"/><rect x="26" y="96" width="11" height="1.5" fill="#af00db"/><rect x="38" y="96" width="9" height="1.5" fill="#001080"/><rect x="16" y="98" width="8" height="1.5" fill="#001080"/><rect x="26" y="98" width="11" height="1.5" fill="#0000ff"/><rect x="39" y="98" width="6" height="1.5" fill="#001080"/><rect x="46" y="98" width="4" height="1.5" fill="#001080"/><rect x="12" y="100" width="10" height="1.5" fill="#af00db"/><rect x="23" y="100" width="5" height="1.5" fill="#001080"/><rect x="29" y="100" width="5" height="1.5" fill="#af00db"/><rect x="35" y="100" width="3" height="1.5" fill="#001080"/><rect x="12" y="102" width="8" height="1.5" fill="#267f99"/><rect x="21" y="102" width="2" height="1.5" fill="#333"/><rect x="12" y="104" width="3" height="1.5" fill="#795e26"/><rect x="16" y="104" width="9" height="1.5" fill="#008000"/><rect x="26" y="104" width="8" height="1.5" fill="#267f99"/><rect x="35" y="104" width="5" height="1.5" fill="#af00db"/><rect x="8" y="106" width="9" height="1.5" fill="#795e26"/><rect x="8" y="108" width="7" height="1.5" fill="#001080"/><rect x="17" y="108" width="5" height="1.5" fill="#267f99"/><rect x="23" y="108" width="8" height="1.5" fill="#333"/><rect x="33" y="108" width="8" height="1.5" fill="#267f99"/><rect x="42" y="108" width="9" height="1.5" fill="#795e26"/><rect x="8" y="112" width="12" height="1.5" fill="#001080"/><rect x="21" y="112" width="6" height="1.5" fill="#a31515"/><rect x="12" y="114" width="4" height="1.5" fill="#267f99"/><rect x="18" y="114" width="10" height="1.5" fill="#795e26"/><rect x="30" y="114" width="4" height="1.5" fill="#267f99"/><rect x="36" y="114" width="1" height="1.5" fill="#001080"/><rect x="12" y="120" width="9" height="1.5" fill="#001080"/><rect x="22" y="120" width="7" height="1.5" fill="#a31515"/><rect x="30" y="120" width="8" height="1.5" fill="#333"/><rect x="16" y="122" width="10" height="1.5" fill="#001080"/><rect x="12" y="124" width="9" height="1.5" fill="#008000"/><rect x="22" y="124" width="3" height="1.5" fill="#333"/><rect x="16" y="126" width="7" height="1.5" fill="#333"/><rect x="24" y="126" width="12" height="1.5" fill="#a31515"/><rect x="37" y="126" width="11" height="1.5" fill="#a31515"/><rect x="49" y="126" width="7" height="1.5" fill="#333"/><rect x="57" y="126" width="7" height="1.5" fill="#001080"/><rect x="65" y="126" width="6" height="1.5" fill="#001080"/><rect x="73" y="126" width="5" height="1.5" fill="#267f99"/><rect x="80" y="126" width="9" height="1.5" fill="#001080"/><rect x="90" y="126" width="9" height="1.5" fill="#001080"/><rect x="101" y="126" width="1" height="1.5" fill="#001080"/><rect x="16" y="128" width="6" height="1.5" fill="#001080"/><rect x="24" y="128" width="4" height="1.5" fill="#008000"/><rect x="29" y="128" width="6" height="1.5" fill="#001080"/><rect x="36" y="128" width="12" height="1.5" fill="#267f99"/><rect x="12" y="136" width="12" height="1.5" fill="#a31515"/><rect x="26" y="136" width="8" height="1.5" fill="#267f99"/><rect x="16" y="138" width="7" height="1.5" fill="#af00db"/><rect x="24" y="138" width="10" height="1.5" fill="#001080"/><rect x="36" y="138" width="7" height="1.5" fill="#333"/><rect x="45" y="138" width="8" height="1.5" fill="#a31515"/><rect x="54" y="138" width="1" height="1.5" fill="#795e26"/><rect x="12" y="140" width="11" height="1.5" fill="#795e26"/><rect x="25" y="140" width="2" height="1.5" fill="#001080"/><rect x="16" y="142" width="4" height="1.5" fill="#795e26"/><rect x="22" y="142" width="3" height="1.5" fill="#001080"/><rect x="12" y="144" width="8" height="1.5" fill="#008000"/><rect x="21" y="144" width="8" height="1.5" fill="#795e26"/><rect x="30" y="144" width="8" height="1.5" fill="#008000"/><rect x="16" y="150" width="6" height="1.5" fill="#008000"/><rect x="23" y="150" width="7" height="1.5" fill="#267f99"/><rect x="31" y="150" width="8" height="1.5" fill="#af00db"/><rect x="41" y="150" width="12" height="1.5" fill="#0000ff"/><rect x="54" y="150" width="11" height="1.5" fill="#af00db"/><rect x="66" y="150" width="8" height="1.5" fill="#001080"/><rect x="12" y="152" width="12" height="1.5" fill="#008000"/><rect x="26" y="152" width="7" height="1.5" fill="#a31515"/><rect x="24" y="158" width="7" height="1.5" fill="#af00db"/><rect x="32" y="158" width="8" height="1.5" fill="#0000ff"/><rect x="41" y="158" width="1" height="1.5" fill="#0000ff"/><rect x="20" y="160" width="7" height="1.5" fill="#008000"/><rect x="29" y="160" width="7" height="1.5" fill="#008000"/><rect x="37" y="160" width="6" height="1.5" fill="#267f99"/><rect x="45" y="160" width="11" height="1.5" fill="#795e26"/><rect x="57" y="160" width="8" height="1.5" fill="#0000ff"/><rect x="66" y="160" width="8" height="1.5" fill="#267f99"/><rect x="16" y="162" width="9" height="1.5" fill="#333"/><rect x="26" y="162" width="9" height="1.5" fill="#af00db"/><rect x="8" y="166" width="5" height="1.5" fill="#a31515"/><rect x="14" y="166" width="9" height="1.5" fill="#001080"/><rect x="25" y="166" width="8" height="1.5" fill="#a31515"/><rect x="8" y="172" width="5" height="1.5" fill="#001080"/><rect x="15" y="172" width="9" height="1.5" fill="#795e26"/><rect x="26" y="172" width="6" height="1.5" fill="#008000"/><rect x="34" y="172" width="2" height="1.5" fill="#008000"/><rect x="8" y="174" width="10" height="1.5" fill="#333"/><rect x="20" y="174" width="4" height="1.5" fill="#001080"/><rect x="25" y="174" width="6" height="1.5" fill="#001080"/><rect x="12" y="176" width="3" height="1.5" fill="#333"/><rect x="16" y="176" width="3" height="1.5" fill="#001080"/><rect x="20" y="176" width="9" height="1.5" fill="#af00db"/><rect x="30" y="176" width="5" height="1.5" fill="#267f99"/><rect x="37" y="176" width="5" height="1.5" fill="#0000ff"/><rect x="43" y="176" width="9" height="1.5" fill="#267f99"/><rect x="54" y="176" width="7" height="1.5" fill="#a31515"/><rect x="62" y="176" width="10" height="1.5" fill="#a31515"/><rect x="74" y="176" width="4" height="1.5" fill="#a31515"/><rect x="80" y="176" width="5" height="1.5" fill="#af00db"/><rect x="86" y="176" width="10" height="1.5" fill="#001080"/><rect x="98" y="176" width="10" height="1.5" fill="#001080"/><rect x="109" y="176" width="3" height="1.5" fill="#795e26"/><rect x="12" y="178" width="10" height="1.5" fill="#333"/><rect x="23" y="178" width="10" height="1.5" fill="#af00db"/><rect x="34" y="178" width="8" height="1.5" fill="#af00db"/><rect x="12" y="180" width="10" height="1.5" fill="#267f99"/><rect x="23" y="180" width="5" height="1.5" fill="#001080"/><rect x="12" y="182" width="9" height="1.5" fill="#333"/><rect x="23" y="182" width="1" height="1.5" fill="#001080"/><rect x="16" y="186" width="9" height="1.5" fill="#af00db"/><rect x="26" y="186" width="5" height="1.5" fill="#0000ff"/><rect x="32" y="186" width="7" height="1.5" fill="#333"/><rect x="40" y="186" width="6" height="1.5" fill="#a31515"/><rect x="12" y="188" width="3" height="1.5" fill="#795e26"/><rect x="16" y="188" width="5" height="1.5" fill="#001080"/><rect x="22" y="188" width="3" height="1.5" fill="#333"/><rect x="12" y="194" width="7" height="1.5" fill="#001080"/><rect x="20" y="194" width="9" height="1.5" fill="#795e26"/><rect x="31" y="194" width="4" height="1.5" fill="#008000"/><rect x="12" y="198" width="7" height="1.5" fill="#0000ff"/><rect x="20" y="198" width="9" height="1.5" fill="#001080"/><rect x="31" y="198" width="7" height="1.5" fill="#008000"/><rect x="40" y="198" width="4" height="1.5" fill="#0000ff"/><rect x="45" y="198" width="1" height="1.5" fill="#001080"/><rect x="12" y="200" width="4" height="1.5" fill="#008000"/><rect x="17" y="200" width="9" height="1.5" fill="#008000"/><rect x="27" y="200" width="7" height="1.5" fill="#001080"/><rect x="35" y="200" width="3" height="1.5" fill="#795e26"/><rect x="40" y="200" width="5" height="1.5" fill="#a31515"/><rect x="12" y="202" width="9" height="1.5" fill="#333"/><rect x="23" y="202" width="4" height="1.5" fill="#a31515"/><rect x="28" y="202" width="2" height="1.5" fill="#267f99"/><rect x="8" y="206" width="8" height="1.5" fill="#008000"/><rect x="17" y="206" width="4" height="1.5" fill="#001080"/><rect x="22" y="206" width="12" height="1.5" fill="#001080"/><rect x="35" y="206" width="4" height="1.5" fill="#af00db"/><rect x="12" y="208" width="4" height="1.5" fill="#795e26"/><rect x="17" y="208" width="5" height="1.5" fill="#001080"/><rect x="8" y="210" width="9" height="1.5" fill="#333"/><rect x="18" y="210" width="6" height="1.5" fill="#af00db"/><rect x="26" y="210" width="9" height="1.5" fill="#008000"/><rect x="36" y="210" width="6" height="1.5" fill="#001080"/><rect x="12" y="216" width="8" height="1.5" fill="#795e26"/><rect x="21" y="216" width="7" height="1.5" fill="#008000"/><rect x="8" y="218" width="7" height="1.5" fill="#001080"/><rect x="17" y="218" width="5" height="1.5" fill="#a31515"/><rect x="24" y="218" width="7" height="1.5" fill="#333"/><rect x="32" y="218" width="8" height="1.5" fill="#333"/><rect x="12" y="222" width="12" height="1.5" fill="#001080"/><rect x="26" y="222" width="6" height="1.5" fill="#001080"/><rect x="33" y="222" width="6" height="1.5" fill="#008000"/><rect x="41" y="222" width="9" height="1.5" fill="#0000ff"/><rect x="51" y="222" width="4" height="1.5" fill="#0000ff"/><rect x="56" y="222" width="10" height="1.5" fill="#001080"/><rect x="67" y="222" width="5" height="1.5" fill="#795e26"/><rect x="74" y="222" width="10" height="1.5" fill="#333"/><rect x="8" y="226" width="12" height="1.5" fill="#af00db"/><rect x="21" y="226" width="3" height="1.5" fill="#a31515"/><rect x="26" y="226" width="8" height="1.5" fill="#795e26"/><rect x="36" y="226" width="8" height="1.5" fill="#af00db"/><rect x="45" y="226" width="8" height="1.5" fill="#333"/><rect x="12" y="228" width="5" height="1.5" fill="#a31515"/><rect x="19" y="228" width="9" height="1.5" fill="#001080"/><rect x="29" y="228" width="6" height="1.5" fill="#267f99"/><rect x="36" y="228" width="3" height="1.5" fill="#af00db"/><rect x="12" y="234" width="6" height="1.5" fill="#0000ff"/><rect x="19" y="234" width="3" height="1.5" fill="#af00db"/><rect x="23" y="234" width="5" height="1.5" fill="#001080"/><rect x="16" y="236" width="9" height="1.5" fill="#a31515"/><rect x="26" y="236" width="10" height="1.5" fill="#267f99"/><rect x="37" y="236" width="4" height="1.5" fill="#001080"/><rect x="43" y="236" width="8" height="1.5" fill="#333"/><rect x="53" y="236" width="9" height="1.5" fill="#267f99"/><rect x="63" y="236" width="6" height="1.5" fill="#001080"/><rect x="16" y="238" width="8" height="1.5" fill="#a31515"/><rect x="26" y="238" width="4" height="1.5" fill="#795e26"/><rect x="31" y="238" width="10" height="1.5" fill="#795e26"/><rect x="16" y="244" width="7" height="1.5" fill="#267f99"/><rect x="24" y="244" width="4" height="1.5" fill="#0000ff"/><rect x="30" y="244" width="9" height="1.5" fill="#af00db"/><rect x="40" y="244" width="9" height="1.5" fill="#001080"/><rect x="50" y="244" width="4" height="1.5" fill="#333"/><rect x="55" y="244" width="4" height="1.5" fill="#333"/><rect x="61" y="244" width="7" height="1.5" fill="#001080"/><rect x="12" y="246" width="4" height="1.5" fill="#008000"/><rect x="17" y="246" width="8" height="1.5" fill="#267f99"/><rect x="12" y="252" width="8" height="1.5" fill="#008000"/><rect x="21" y="252" width="10" height="1.5" fill="#795e26"/><rect x="32" y="252" width="7" height="1.5" fill="#001080"/><rect x="40" y="252" width="8" height="1.5" fill="#0000ff"/><rect x="49" y="252" width="3" height="1.5" fill="#af00db"/><rect x="54" y="252" width="2" height="1.5" fill="#795e26"/><rect x="8" y="254" width="4" height="1.5" fill="#a31515"/><rect x="14" y="254" width="8" height="1.5" fill="#a31515"/><rect x="23" y="254" width="5" height="1.5" fill="#0000ff"/><rect x="30" y="254" width="10" height="1.5" fill="#267f99"/><rect x="41" y="254" width="5" height="1.5" fill="#795e26"/><rect x="47" y="254" width="4" height="1.5" fill="#795e26"/><rect x="52" y="254" width="5" height="1.5" fill="#795e26"/><rect x="59" y="254" width="7" height="1.5" fill="#a31515"/><rect x="67" y="254" width="4" height="1.5" fill="#001080"/><rect x="8" y="256" width="6" height="1.5" fill="#a31515"/><rect x="15" y="256" width="4" height="1.5" fill="#008000"/><rect x="20" y="256" width="10" height="1.5" fill="#333"/><rect x="31" y="256" width="11" height="1.5" fill="#001080"/><rect x="43" y="256" width="5" height="1.5" fill="#a31515"/><rect x="12" y="258" width="6" height="1.5" fill="#795e26"/><rect x="19" y="258" width="7" height="1.5" fill="#333"/><rect x="27" y="258" width="2" height="1.5" fill="#af00db"/><rect x="12" y="260" width="3" height="1.5" fill="#af00db"/><rect x="16" y="260" width="11" height="1.5" fill="#0000ff"/><rect x="28" y="260" width="7" height="1.5" fill="#001080"/><rect x="12" y="266" width="6" height="1.5" fill="#008000"/><rect x="20" y="266" width="7" height="1.5" fill="#795e26"/><rect x="28" y="266" width="5" height="1.5" fill="#333"/><rect x="16" y="268" width="6" height="1.5" fill="#001080"/><rect x="24" y="268" width="1" height="1.5" fill="#af00db"/><rect x="12" y="278" width="4" height="1.5" fill="#001080"/><rect x="17" y="278" width="12" height="1.5" fill="#333"/><rect x="31" y="278" width="6" height="1.5" fill="#af00db"/><rect x="38" y="278" width="7" height="1.5" fill="#267f99"/><rect x="46" y="278" width="1" height="1.5" fill="#333"/><rect x="16" y="280" width="11" height="1.5" fill="#af00db"/><rect x="28" y="280" width="7" height="1.5" fill="#795e26"/><rect x="36" y="280" width="10" height="1.5" fill="#008000"/><rect x="47" y="280" width="3" height="1.5" fill="#267f99"/><rect x="12" y="282" width="5" height="1.5" fill="#008000"/><rect x="19" y="282" width="2" height="1.5" fill="#af00db"/><rect x="20" y="284" width="6" height="1.5" fill="#267f99"/><rect x="28" y="284" width="5" height="1.5" fill="#001080"/><rect x="34" y="284" width="11" height="1.5" fill="#a31515"/><rect x="46" y="284" width="9" height="1.5" fill="#001080"/><rect x="56" y="284" width="12" height="1.5" fill="#795e26"/><rect x="69" y="284" width="7" height="1.5" fill="#001080"/><rect x="78" y="284" width="2" height="1.5" fill="#267f99"/><rect x="12" y="288" width="6" height="1.5" fill="#001080"/><rect x="19" y="288" width="9" height="1.5" fill="#001080"/><rect x="30" y="288" width="8" height="1.5" fill="#af00db"/><rect x="12" y="290" width="3" height="1.5" fill="#795e26"/><rect x="16" y="290" width="8" height="1.5" fill="#795e26"/><rect x="25" y="290" width="11" height="1.5" fill="#af00db"/><rect x="37" y="290" width="6" height="1.5" fill="#267f99"/><rect x="44" y="290" width="1" height="1.5" fill="#008000"/><rect x="16" y="292" width="10" height="1.5" fill="#795e26"/><rect x="28" y="292" width="9" height="1.5" fill="#267f99"/><rect x="38" y="292" width="3" height="1.5" fill="#a31515"/><rect x="42" y="292" width="7" height="1.5" fill="#001080"/><rect x="51" y="292" width="5" height="1.5" fill="#a31515"/><rect x="58" y="292" width="9" height="1.5" fill="#795e26"/><rect x="68" y="292" width="4" height="1.5" fill="#0000ff"/><rect x="73" y="292" width="5" height="1.5" fill="#0000ff"/><rect x="79" y="292" width="6" height="1.5" fill="#001080"/><rect x="86" y="292" width="1" height="1.5" fill="#267f99"/><rect x="12" y="296" width="9" height="1.5" fill="#795e26"/><rect x="22" y="296" width="3" height="1.5" fill="#795e26"/><rect x="26" y="296" width="3" height="1.5" fill="#af00db"/><rect x="12" y="298" width="5" height="1.5" fill="#333"/><rect x="19" y="298" width="11" height="1.5" fill="#a31515"/><rect x="31" y="298" width="6" height="1.5" fill="#267f99"/><rect x="8" y="300" width="9" height="1.5" fill="#af00db"/><rect x="18" y="300" width="11" height="1.5" fill="#0000ff"/><rect x="12" y="304" width="3" height="1.5" fill="#008000"/><rect x="17" y="304" width="3" height="1.5" fill="#a31515"/><rect x="8" y="306" width="4" height="1.5" fill="#0000ff"/><rect x="13" y="306" width="7" height="1.5" fill="#001080"/><rect x="21" y="306" width="4" height="1.5" fill="#267f99"/><rect x="26" y="306" width="1" height="1.5" fill="#008000"/><rect x="8" y="308" width="6" height="1.5" fill="#af00db"/><rect x="15" y="308" width="6" height="1.5" fill="#008000"/><rect x="22" y="308" width="2" height="1.5" fill="#795e26"/><rect x="8" y="316" width="7" height="1.5" fill="#001080"/><rect x="16" y="316" width="4" height="1.5" fill="#0000ff"/><rect x="21" y="316" width="9" height="1.5" fill="#a31515"/><rect x="31" y="316" width="2" height="1.5" fill="#008000"/><rect x="16" y="318" width="4" height="1.5" fill="#001080"/><rect x="21" y="318" width="8" height="1.5" fill="#0000ff"/><rect x="30" y="318" width="2" height="1.5" fill="#a31515"/><rect x="8" y="320" width="12" height="1.5" fill="#0000ff"/><rect x="21" y="320" width="3" height="1.5" fill="#795e26"/><rect x="25" y="320" width="3" height="1.5" fill="#333"/><rect x="8" y="322" width="10" height="1.5" fill="#008000"/><rect x="19" y="322" width="9" height="1.5" fill="#001080"/><rect x="29" y="322" width="11" height="1.5" fill="#a31515"/><rect x="41" y="322" width="1" height="1.5" fill="#0000ff"/><rect x="8" y="324" width="6" height="1.5" fill="#a31515"/><rect x="16" y="324" width="6" height="1.5" fill="#795e26"/><rect x="12" y="328" width="10" height="1.5" fill="#333"/><rect x="23" y="328" width="12" height="1.5" fill="#333"/><rect x="8" y="330" width="3" height="1.5" fill="#0000ff"/><rect x="13" y="330" width="6" height="1.5" fill="#267f99"/><rect x="12" y="336" width="8" height="1.5" fill="#267f99"/><rect x="21" y="336" width="8" height="1.5" fill="#333"/><rect x="30" y="336" width="6" height="1.5" fill="#795e26"/><rect x="37" y="336" width="8" height="1.5" fill="#af00db"/><rect x="47" y="336" width="5" height="1.5" fill="#001080"/><rect x="53" y="336" width="3" height="1.5" fill="#a31515"/><rect x="12" y="338" width="3" height="1.5" fill="#af00db"/><rect x="17" y="338" width="9" height="1.5" fill="#008000"/><rect x="27" y="338" width="8" height="1.5" fill="#a31515"/><rect x="16" y="340" width="7" height="1.5" fill="#0000ff"/><rect x="25" y="340" width="8" height="1.5" fill="#af00db"/><rect x="34" y="340" width="6" height="1.5" fill="#af00db"/><rect x="42" y="340" width="4" height="1.5" fill="#af00db"/><rect x="8" y="342" width="6" height="1.5" fill="#267f99"/><rect x="16" y="342" width="7" height="1.5" fill="#795e26"/><rect x="25" y="342" width="5" height="1.5" fill="#001080"/><rect x="31" y="342" width="12" height="1.5" fill="#af00db"/><rect x="44" y="342" width="3" height="1.5" fill="#267f99"/><rect x="12" y="352" width="4" height="1.5" fill="#001080"/><rect x="17" y="352" width="7" height="1.5" fill="#0000ff"/><rect x="26" y="352" width="11" height="1.5" fill="#001080"/><rect x="38" y="352" width="4" height="1.5" fill="#001080"/><rect x="12" y="354" width="10" height="1.5" fill="#a31515"/><rect x="23" y="354" width="6" height="1.5" fill="#267f99"/><rect x="16" y="356" width="11" height="1.5" fill="#a31515"/><rect x="28" y="356" width="2" height="1.5" fill="#af00db"/><rect x="12" y="358" width="4" height="1.5" fill="#af00db"/><rect x="17" y="358" width="3" height="1.5" fill="#a31515"/><rect x="22" y="358" width="12" height="1.5" fill="#af00db"/><rect x="35" y="358" width="9" height="1.5" fill="#a31515"/><rect x="45" y="358" width="6" height="1.5" fill="#001080"/><rect x="52" y="358" width="6" height="1.5" fill="#0000ff"/><rect x="12" y="360" width="7" height="1.5" fill="#001080"/><rect x="16" y="362" width="6" height="1.5" fill="#267f99"/><rect x="23" y="362" width="3" height="1.5" fill="#267f99"/><rect x="27" y="362" width="11" height="1.5" fill="#267f99"/><rect x="40" y="362" width="3" height="1.5" fill="#795e26"/><rect x="45" y="362" width="4" height="1.5" fill="#a31515"/><rect x="12" y="364" width="10" height="1.5" fill="#001080"/><rect x="23" y="364" width="3" height="1.5" fill="#af00db"/><rect x="28" y="364" width="4" height="1.5" fill="#001080"/><rect x="33" y="364" width="8" height="1.5" fill="#001080"/><rect x="43" y="364" width="7" height="1.5" fill="#001080"/><rect x="52" y="364" width="10" height="1.5" fill="#001080"/><rect x="63" y="364" width="4" height="1.5" fill="#0000ff"/><rect x="68" y="364" width="4" height="1.5" fill="#a31515"/><rect x="20" y="366" width="11" height="1.5" fill="#001080"/><rect x="32" y="366" width="5" height="1.5" fill="#267f99"/><rect x="8" y="374" width="8" height="1.5" fill="#333"/><rect x="18" y="374" width="7" height="1.5" fill="#0000ff"/><rect x="27" y="374" width="10" height="1.5" fill="#0000ff"/><rect x="38" y="374" width="1" height="1.5" fill="#001080"/><rect x="8" y="376" width="5" height="1.5" fill="#795e26"/><rect x="14" y="376" width="5" height="1.5" fill="#333"/><rect x="20" y="376" width="2" height="1.5" fill="#af00db"/><rect x="8" y="380" width="8" height="1.5" fill="#333"/><rect x="8" y="382" width="3" height="1.5" fill="#af00db"/><rect x="12" y="382" width="4" height="1.5" fill="#001080"/><rect x="18" y="382" width="8" height="1.5" fill="#267f99"/><rect x="27" y="382" width="6" height="1.5" fill="#008000"/><rect x="34" y="382" width="5" height="1.5" fill="#a31515"/><rect x="40" y="382" width="9" height="1.5" fill="#0000ff"/><rect x="50" y="382" width="8" height="1.5" fill="#333"/><rect x="59" y="382" width="5" height="1.5" fill="#267f99"/><rect x="66" y="382" width="3" height="1.5" fill="#795e26"/><rect x="71" y="382" width="10" height="1.5" fill="#0000ff"/><rect x="16" y="384" width="4" height="1.5" fill="#001080"/><rect x="22" y="384" width="10" height="1.5" fill="#267f99"/><rect x="34" y="384" width="8" height="1.5" fill="#267f99"/><rect x="12" y="386" width="3" height="1.5" fill="#333"/><rect x="16" y="386" width="11" height="1.5" fill="#008000"/><rect x="28" y="386" width="7" height="1.5" fill="#001080"/><rect x="37" y="386" width="1" height="1.5" fill="#0000ff"/><rect x="16" y="394" width="10" height="1.5" fill="#333"/><rect x="27" y="394" width="3" height="1.5" fill="#af00db"/><rect x="16" y="398" width="4" height="1.5" fill="#001080"/><rect x="22" y="398" width="6" height="1.5" fill="#a31515"/><rect x="8" y="400" width="11" height="1.5" fill="#0000ff"/><rect x="20" y="400" width="4" height="1.5" fill="#333"/><rect x="8" y="402" width="6" height="1.5" fill="#001080"/><rect x="15" y="402" width="11" height="1.5" fill="#008000"/><rect x="27" y="402" width="6" height="1.5" fill="#001080"/><rect x="34" y="402" width="2" height="1.5" fill="#333"/><rect x="8" y="404" width="4" height="1.5" fill="#0000ff"/><rect x="13" y="404" width="8" height="1.5" fill="#795e26"/><rect x="22" y="404" width="4" height="1.5" fill="#267f99"/><rect x="27" y="404" width="12" height="1.5" fill="#267f99"/><rect x="40" y="404" width="8" height="1.5" fill="#008000"/><rect x="8" y="408" width="6" height="1.5" fill="#333"/><rect x="16" y="408" width="9" height="1.5" fill="#267f99"/><rect x="16" y="410" width="7" height="1.5" fill="#795e26"/><rect x="25" y="410" width="6" height="1.5" fill="#af00db"/><rect x="32" y="410" width="5" height="1.5" fill="#008000"/><rect x="38" y="410" width="5" height="1.5" fill="#a31515"/><rect x="12" y="416" width="6" height="1.5" fill="#0000ff"/><rect x="19" y="416" width="3" height="1.5" fill="#795e26"/><rect x="12" y="420" width="7" height="1.5" fill="#008000"/><rect x="20" y="420" width="11" height="1.5" fill="#001080"/><rect x="32" y="420" width="8" height="1.5" fill="#333"/><rect x="42" y="420" width="9" height="1.5" fill="#795e26"/><rect x="52" y="420" width="8" height="1.5" fill="#001080"/><rect x="12" y="424" width="6" height="1.5" fill="#008000"/><rect x="19" y="424" width="6" height="1.5" fill="#267f99"/><rect x="27" y="424" width="6" height="1.5" fill="#008000"/><rect x="12" y="428" width="7" height="1.5" fill="#a31515"/><rect x="21" y="428" width="3" height="1.5" fill="#795e26"/><rect x="25" y="428" width="9" height="1.5" fill="#0000ff"/><rect x="35" y="428" width="6" height="1.5" fill="#a31515"/><rect x="12" y="436" width="4" height="1.5" fill="#008000"/><rect x="17" y="436" width="4" height="1.5" fill="#0000ff"/><rect x="22" y="436" width="8" height="1.5" fill="#001080"/><rect x="32" y="436" width="9" height="1.5" fill="#0000ff"/><rect x="8" y="438" width="5" height="1.5" fill="#008000"/><rect x="15" y="438" width="8" height="1.5" fill="#008000"/><rect x="25" y="438" width="2" height="1.5" fill="#001080"/><rect x="12" y="440" width="11" height="1.5" fill="#001080"/><rect x="24" y="440" width="3" height="1.5" fill="#008000"/><rect x="16" y="442" width="12" height="1.5" fill="#795e26"/><rect x="29" y="442" width="8" height="1.5" fill="#af00db"/><rect x="39" y="442" width="9" height="1.5" fill="#001080"/><rect x="50" y="442" width="4" height="1.5" fill="#001080"/><rect x="55" y="442" width="12" height="1.5" fill="#a31515"/><rect x="69" y="442" width="10" height="1.5" fill="#001080"/><rect x="80" y="442" width="10" height="1.5" fill="#af00db"/><rect x="91" y="442" width="8" height="1.5" fill="#0000ff"/><rect x="100" y="442" width="4" height="1.5" fill="#0000ff"/><rect x="105" y="442" width="4" height="1.5" fill="#333"/><rect x="8" y="444" width="12" height="1.5" fill="#001080"/><rect x="21" y="444" width="11" height="1.5" fill="#795e26"/><rect x="12" y="454" width="6" height="1.5" fill="#267f99"/><rect x="19" y="454" width="3" height="1.5" fill="#795e26"/><rect x="24" y="454" width="3" height="1.5" fill="#af00db"/><rect x="12" y="462" width="12" height="1.5" fill="#001080"/><rect x="25" y="462" width="3" height="1.5" fill="#795e26"/><rect x="29" y="462" width="4" height="1.5" fill="#267f99"/><rect x="34" y="462" width="5" height="1.5" fill="#333"/><rect x="12" y="468" width="3" height="1.5" fill="#267f99"/><rect x="16" y="468" width="7" height="1.5" fill="#001080"/><rect x="24" y="468" width="7" height="1.5" fill="#333"/><rect x="32" y="468" width="9" height="1.5" fill="#0000ff"/><rect x="42" y="468" width="2" height="1.5" fill="#333"/><rect x="12" y="476" width="6" height="1.5" fill="#0000ff"/><rect x="19" y="476" width="9" height="1.5" fill="#008000"/><rect x="16" y="478" width="3" height="1.5" fill="#a31515"/><rect x="21" y="478" width="3" height="1.5" fill="#af00db"/><rect x="26" y="478" width="1" height="1.5" fill="#333"/><rect x="12" y="480" width="8" height="1.5" fill="#001080"/><rect x="21" y="480" width="8" height="1.5" fill="#008000"/><rect x="30" y="480" width="11" height="1.5" fill="#333"/><rect x="8" y="490" width="8" height="1.5" fill="#795e26"/><rect x="17" y="490" width="12" height="1.5" fill="#0000ff"/><rect x="30" y="490" width="4" height="1.5" fill="#001080"/><rect x="8" y="492" width="8" height="1.5" fill="#001080"/><rect x="17" y="492" width="6" height="1.5" fill="#a31515"/><rect x="25" y="492" width="7" height="1.5" fill="#267f99"/><rect x="34" y="492" width="6" height="1.5" fill="#267f99"/><rect x="8" y="498" width="3" height="1.5" fill="#0000ff"/><rect x="12" y="498" width="5" height="1.5" fill="#a31515"/><rect x="19" y="498" width="7" height="1.5" fill="#001080"/><rect x="27" y="498" width="3" height="1.5" fill="#267f99"/><rect x="32" y="498" width="4" height="1.5" fill="#333"/><rect x="37" y="498" width="8" height="1.5" fill="#001080"/><rect x="47" y="498" width="6" height="1.5" fill="#333"/><rect x="12" y="500" width="4" height="1.5" fill="#af00db"/><rect x="17" y="500" width="10" height="1.5" fill="#af00db"/><rect x="28" y="500" width="10" height="1.5" fill="#267f99"/><rect x="39" y="500" width="2" height="1.5" fill="#0000ff"/><rect x="8" y="502" width="11" height="1.5" fill="#001080"/><rect x="21" y="502" width="4" height="1.5" fill="#267f99"/><rect x="26" y="502" width="11" height="1.5" fill="#001080"/><rect x="38" y="502" width="4" height="1.5" fill="#267f99"/><rect x="43" y="502" width="11" height="1.5" fill="#af00db"/><rect x="55" y="502" width="5" height="1.5" fill="#a31515"/><rect x="61" y="502" width="9" height="1.5" fill="#001080"/><rect x="71" y="502" width="9" height="1.5" fill="#795e26"/><rect x="82" y="502" width="8" height="1.5" fill="#008000"/><rect x="12" y="512" width="12" height="1.5" fill="#0000ff"/><rect x="20" y="516" width="11" height="1.5" fill="#267f99"/><rect x="32" y="516" width="12" height="1.5" fill="#008000"/><rect x="45" y="516" width="1" height="1.5" fill="#af00db"/><rect x="16" y="518" width="10" height="1.5" fill="#795e26"/><rect x="28" y="518" width="7" height="1.5" fill="#0000ff"/><rect x="37" y="518" width="9" height="1.5" fill="#001080"/><rect x="12" y="520" width="6" height="1.5" fill="#267f99"/><rect x="20" y="520" width="4" height="1.5" fill="#333"/><rect x="25" y="520" width="9" height="1.5" fill="#333"/><rect x="35" y="520" width="7" height="1.5" fill="#008000"/><rect x="16" y="522" width="11" height="1.5" fill="#af00db"/><rect x="28" y="522" width="5" height="1.5" fill="#af00db"/><rect x="16" y="524" width="8" height="1.5" fill="#a31515"/><rect x="25" y="524" width="6" height="1.5" fill="#af00db"/><rect x="32" y="524" width="6" height="1.5" fill="#333"/><rect x="40" y="524" width="8" height="1.5" fill="#0000ff"/><rect x="8" y="530" width="7" height="1.5" fill="#a31515"/><rect x="16" y="530" width="6" height="1.5" fill="#0000ff"/><rect x="23" y="530" width="5" height="1.5" fill="#333"/><rect x="29" y="530" width="7" height="1.5" fill="#a31515"/><rect x="37" y="530" width="4" height="1.5" fill="#af00db"/><rect x="8" y="532" width="7" height="1.5" fill="#333"/><rect x="16" y="532" width="9" height="1.5" fill="#af00db"/><rect x="27" y="532" width="5" height="1.5" fill="#001080"/><rect x="34" y="532" width="5" height="1.5" fill="#333"/><rect x="12" y="534" width="7" height="1.5" fill="#001080"/><rect x="20" y="534" width="8" height="1.5" fill="#333"/><rect x="16" y="536" width="6" height="1.5" fill="#333"/><rect x="23" y="536" width="12" height="1.5" fill="#0000ff"/><rect x="36" y="536" width="4" height="1.5" fill="#333"/><rect x="41" y="536" width="6" height="1.5" fill="#001080"/><rect x="12" y="540" width="8" height="1.5" fill="#af00db"/><rect x="21" y="540" width="4" height="1.5" fill="#af00db"/><rect x="26" y="540" width="9" height="1.5" fill="#af00db"/><rect x="37" y="540" width="11" height="1.5" fill="#333"/><rect x="49" y="540" width="9" height="1.5" fill="#333"/><rect x="60" y="540" width="5" height="1.5" fill="#001080"/><rect x="67" y="540" width="8" height="1.5" fill="#008000"/><rect x="76" y="540" width="4" height="1.5" fill="#267f99"/><rect x="81" y="540" width="10" height="1.5" fill="#795e26"/><rect x="12" y="542" width="4" height="1.5" fill="#af00db"/><rect x="17" y="542" width="7" height="1.5" fill="#0000ff"/><rect x="25" y="542" width="7" height="1.5" fill="#af00db"/><rect x="34" y="542" width="3" height="1.5" fill="#267f99"/><rect x="16" y="544" width="12" height="1.5" fill="#0000ff"/><rect x="29" y="544" width="4" height="1.5" fill="#333"/><rect x="34" y="544" width="3" height="1.5" fill="#001080"/><rect x="38" y="544" width="7" height="1.5" fill="#a31515"/><rect x="46" y="544" width="9" height="1.5" fill="#001080"/><rect x="56" y="544" width="5" height="1.5" fill="#333"/><rect x="63" y="544" width="4" height="1.5" fill="#001080"/><rect x="68" y="544" width="4" height="1.5" fill="#795e26"/><rect x="73" y="544" width="6" height="1.5" fill="#267f99"/><rect x="80" y="544" width="8" height="1.5" fill="#795e26"/><rect x="89" y="544" width="9" height="1.5" fill="#001080"/><rect x="99" y="544" width="7" height="1.5" fill="#001080"/><rect x="108" y="544" width="4" height="1.5" fill="#333"/><rect x="16" y="550" width="6" height="1.5" fill="#a31515"/><rect x="23" y="550" width="5" height="1.5" fill="#795e26"/><rect x="20" y="552" width="12" height="1.5" fill="#333"/><rect x="34" y="552" width="2" height="1.5" fill="#001080"/><rect x="12" y="554" width="6" height="1.5" fill="#001080"/><rect x="19" y="554" width="11" height="1.5" fill="#001080"/><rect x="16" y="556" width="3" height="1.5" fill="#267f99"/><rect x="21" y="556" width="5" height="1.5" fill="#0000ff"/><rect x="28" y="556" width="2" height="1.5" fill="#001080"/><rect x="16" y="558" width="6" height="1.5" fill="#0000ff"/><rect x="23" y="558" width="9" height="1.5" fill="#a31515"/><rect x="34" y="558" width="12" height="1.5" fill="#001080"/><rect x="47" y="558" width="3" height="1.5" fill="#001080"/><rect x="51" y="558" width="3" height="1.5" fill="#267f99"/><rect x="55" y="558" width="9" height="1.5" fill="#af00db"/><rect x="65" y="558" width="4" height="1.5" fill="#795e26"/><rect x="70" y="558" width="10" height="1.5" fill="#795e26"/><rect x="81" y="558" width="8" height="1.5" fill="#af00db"/><rect x="90" y="558" width="5" height="1.5" fill="#0000ff"/><rect x="96" y="558" width="6" height="1.5" fill="#795e26"/><rect x="12" y="560" width="10" height="1.5" fill="#0000ff"/><rect x="23" y="560" width="4" height="1.5" fill="#a31515"/><rect x="28" y="560" width="4" height="1.5" fill="#af00db"/><rect x="34" y="560" width="8" height="1.5" fill="#001080"/><rect x="43" y="560" width="7" height="1.5" fill="#0000ff"/><rect x="51" y="560" width="12" height="1.5" fill="#001080"/><rect x="64" y="560" width="6" height="1.5" fill="#333"/><rect x="16" y="562" width="7" height="1.5" fill="#001080"/><rect x="24" y="562" width="6" height="1.5" fill="#001080"/><rect x="31" y="562" width="7" height="1.5" fill="#333"/><rect x="39" y="562" width="1" height="1.5" fill="#0000ff"/><rect x="12" y="570" width="10" height="1.5" fill="#008000"/><rect x="23" y="570" width="6" height="1.5" fill="#af00db"/><rect x="30" y="570" width="3" height="1.5" fill="#008000"/><rect x="35" y="570" width="4" height="1.5" fill="#333"/><rect x="8" y="572" width="6" height="1.5" fill="#001080"/><rect x="15" y="572" width="6" height="1.5" fill="#267f99"/><rect x="22" y="572" width="12" height="1.5" fill="#001080"/><rect x="35" y="572" width="3" height="1.5" fill="#af00db"/><rect x="12" y="580" width="10" height="1.5" fill="#a31515"/><rect x="24" y="580" width="8" height="1.5" fill="#af00db"/><rect x="33" y="580" width="5" height="1.5" fill="#267f99"/><rect x="39" y="580" width="3" height="1.5" fill="#008000"/><rect x="12" y="582" width="5" height="1.5" fill="#008000"/><rect x="19" y="582" width="11" height="1.5" fill="#a31515"/><rect x="31" y="582" width="8" height="1.5" fill="#795e26"/><rect x="8" y="590" width="3" height="1.5" fill="#0000ff"/><rect x="12" y="590" width="7" height="1.5" fill="#001080"/><rect x="12" y="592" width="3" height="1.5" fill="#008000"/><rect x="16" y="592" width="7" height="1.5" fill="#008000"/><rect x="25" y="592" width="12" height="1.5" fill="#008000"/><rect x="38" y="592" width="3" height="1.5" fill="#0000ff"/><rect x="8" y="594" width="7" height="1.5" fill="#333"/><rect x="8" y="598" width="9" height="1.5" fill="#001080"/><rect x="18" y="598" width="6" height="1.5" fill="#333"/><rect x="25" y="598" width="9" height="1.5" fill="#0000ff"/><rect x="36" y="598" width="3" height="1.5" fill="#001080"/><rect x="40" y="598" width="2" height="1.5" fill="#af00db"/><rect x="16" y="600" width="6" height="1.5" fill="#795e26"/><rect x="24" y="600" width="10" height="1.5" fill="#a31515"/><rect x="16" y="602" width="7" height="1.5" fill="#a31515"/><rect x="24" y="602" width="4" height="1.5" fill="#008000"/><rect x="29" y="602" width="6" height="1.5" fill="#001080"/><rect x="36" y="602" width="11" height="1.5" fill="#0000ff"/><rect x="12" y="604" width="4" height="1.5" fill="#af00db"/><rect x="17" y="604" width="7" height="1.5" fill="#a31515"/><rect x="25" y="604" width="7" height="1.5" fill="#a31515"/><rect x="16" y="612" width="3" height="1.5" fill="#267f99"/><rect x="20" y="612" width="9" height="1.5" fill="#001080"/><rect x="31" y="612" width="7" height="1.5" fill="#008000"/><rect x="40" y="612" width="5" height="1.5" fill="#795e26"/><rect x="16" y="614" width="10" height="1.5" fill="#795e26"/><rect x="27" y="614" width="2" height="1.5" fill="#001080"/><rect x="20" y="618" width="3" height="1.5" fill="#a31515"/><rect x="25" y="618" width="4" height="1.5" fill="#0000ff"/><rect x="30" y="618" width="3" height="1.5" fill="#001080"/><rect x="20" y="620" width="3" height="1.5" fill="#0000ff"/><rect x="24" y="620" width="7" height="1.5" fill="#795e26"/><rect x="33" y="620" width="9" height="1.5" fill="#001080"/><rect x="16" y="632" width="12" height="1.5" fill="#0000ff"/><rect x="29" y="632" width="1" height="1.5" fill="#0000ff"/><rect x="16" y="638" width="9" height="1.5" fill="#795e26"/><rect x="26" y="638" width="4" height="1.5" fill="#001080"/><rect x="16" y="640" width="11" height="1.5" fill="#333"/><rect x="28" y="640" width="12" height="1.5" fill="#333"/><rect x="41" y="640" width="3" height="1.5" fill="#333"/><rect x="8" y="642" width="11" height="1.5" fill="#a31515"/><rect x="8" y="644" width="3" height="1.5" fill="#001080"/><rect x="12" y="644" width="3" height="1.5" fill="#267f99"/><rect x="16" y="644" width="10" height="1.5" fill="#795e26"/><rect x="27" y="644" width="3" height="1.5" fill="#333"/><rect x="31" y="644" width="3" height="1.5" fill="#a31515"/><rect x="35" y="644" width="6" height="1.5" fill="#008000"/><rect x="12" y="646" width="6" height="1.5" fill="#267f99"/><rect x="20" y="646" width="6" height="1.5" fill="#267f99"/><rect x="27" y="646" width="4" height="1.5" fill="#af00db"/><rect x="32" y="646" width="3" height="1.5" fill="#008000"/><rect x="36" y="646" width="3" height="1.5" fill="#267f99"/><rect x="40" y="646" width="3" height="1.5" fill="#008000"/><rect x="16" y="650" width="8" height="1.5" fill="#001080"/><rect x="25" y="650" width="7" height="1.5" fill="#001080"/><rect x="33" y="650" width="9" height="1.5" fill="#267f99"/><rect x="8" y="660" width="6" height="1.5" fill="#008000"/><rect x="15" y="660" width="8" height="1.5" fill="#795e26"/><rect x="25" y="660" width="3" height="1.5" fill="#267f99"/><rect x="8" y="662" width="11" height="1.5" fill="#008000"/><rect x="21" y="662" width="9" height="1.5" fill="#333"/><rect x="8" y="664" width="6" height="1.5" fill="#008000"/><rect x="15" y="664" width="6" height="1.5" fill="#a31515"/><rect x="22" y="664" width="3" height="1.5" fill="#001080"/><rect x="12" y="672" width="9" height="1.5" fill="#a31515"/><rect x="22" y="672" width="12" height="1.5" fill="#267f99"/><rect x="35" y="672" width="9" height="1.5" fill="#a31515"/><rect x="45" y="672" width="9" height="1.5" fill="#001080"/><rect x="55" y="672" width="3" height="1.5" fill="#001080"/><rect x="16" y="674" width="8" height="1.5" fill="#0000ff"/><rect x="26" y="674" width="10" height="1.5" fill="#a31515"/><rect x="37" y="674" width="9" height="1.5" fill="#267f99"/><rect x="16" y="680" width="11" height="1.5" fill="#001080"/><rect x="28" y="680" width="12" height="1.5" fill="#0000ff"/><rect x="42" y="680" width="5" height="1.5" fill="#0000ff"/><rect x="16" y="682" width="9" height="1.5" fill="#af00db"/><rect x="26" y="682" width="7" height="1.5" fill="#001080"/><rect x="16" y="684" width="3" height="1.5" fill="#a31515"/><rect x="20" y="684" width="9" height="1.5" fill="#001080"/><rect x="30" y="684" width="3" height="1.5" fill="#a31515"/><rect x="35" y="684" width="5" height="1.5" fill="#0000ff"/><rect x="41" y="684" width="9" height="1.5" fill="#a31515"/><rect x="51" y="684" width="8" height="1.5" fill="#333"/><rect x="61" y="684" width="3" height="1.5" fill="#333"/><rect x="65" y="684" width="9" height="1.5" fill="#267f99"/><rect x="75" y="684" width="7" height="1.5" fill="#795e26"/><rect x="83" y="684" width="5" height="1.5" fill="#001080"/><rect x="89" y="684" width="4" height="1.5" fill="#001080"/><rect x="95" y="684" width="6" height="1.5" fill="#a31515"/><rect x="102" y="684" width="10" height="1.5" fill="#001080"/><rect x="16" y="692" width="8" height="1.5" fill="#0000ff"/><rect x="25" y="692" width="6" height="1.5" fill="#008000"/><rect x="33" y="692" width="8" height="1.5" fill="#001080"/><rect x="42" y="692" width="4" height="1.5" fill="#a31515"/><rect x="16" y="694" width="12" height="1.5" fill="#0000ff"/><rect x="29" y="694" width="2" height="1.5" fill="#008000"/><rect x="12" y="698" width="8" height="1.5" fill="#795e26"/><rect x="21" y="698" width="6" height="1.5" fill="#008000"/><rect x="28" y="698" width="3" height="1.5" fill="#795e26"/><rect x="32" y="698" width="3" height="1.5" fill="#001080"/><rect x="37" y="698" width="2" height="1.5" fill="#001080"/><rect x="16" y="700" width="12" height="1.5" fill="#333"/><rect x="29" y="700" width="4" height="1.5" fill="#001080"/><rect x="34" y="700" width="3" height="1.5" fill="#af00db"/><rect x="20" y="702" width="8" height="1.5" fill="#001080"/><rect x="29" y="702" width="7" height="1.5" fill="#795e26"/><rect x="38" y="702" width="3" height="1.5" fill="#0000ff"/><rect x="42" y="702" width="7" height="1.5" fill="#001080"/><rect x="12" y="704" width="8" height="1.5" fill="#a31515"/><rect x="8" y="718" width="12" height="1.5" fill="#008000"/><rect x="22" y="718" width="11" height="1.5" fill="#795e26"/><rect x="34" y="718" width="6" height="1.5" fill="#0000ff"/><rect x="16" y="724" width="7" height="1.5" fill="#001080"/><rect x="24" y="724" width="7" height="1.5" fill="#267f99"/><rect x="32" y="724" width="3" height="1.5" fill="#008000"/><rect x="36" y="724" width="11" height="1.5" fill="#795e26"/><rect x="48" y="724" width="11" height="1.5" fill="#008000"/><rect x="61" y="724" width="8" height="1.5" fill="#008000"/><rect x="70" y="724" width="9" height="1.5" fill="#333"/><rect x="81" y="724" width="6" height="1.5" fill="#795e26"/><rect x="88" y="724" width="2" height="1.5" fill="#795e26"/><rect x="16" y="726" width="7" height="1.5" fill="#001080"/><rect x="24" y="726" width="11" height="1.5" fill="#0000ff"/><rect x="36" y="726" width="5" height="1.5" fill="#001080"/><rect x="16" y="728" width="4" height="1.5" fill="#008000"/><rect x="22" y="728" width="9" height="1.5" fill="#333"/><rect x="33" y="728" width="3" height="1.5" fill="#af00db"/><rect x="37" y="728" width="10" height="1.5" fill="#795e26"/><rect x="16" y="730" width="8" height="1.5" fill="#001080"/><rect x="25" y="730" width="6" height="1.5" fill="#795e26"/><rect x="33" y="730" width="4" height="1.5" fill="#795e26"/><rect x="38" y="730" width="8" height="1.5" fill="#af00db"/><rect x="48" y="730" width="1" height="1.5" fill="#001080"/><rect x="12" y="732" width="6" height="1.5" fill="#af00db"/><rect x="19" y="732" width="8" height="1.5" fill="#001080"/><rect x="29" y="732" width="5" height="1.5" fill="#795e26"/><rect x="36" y="732" width="3" height="1.5" fill="#af00db"/><rect x="40" y="732" width="8" height="1.5" fill="#a31515"/><rect x="50" y="732" width="5" height="1.5" fill="#0000ff"/><rect x="57" y="732" width="4" height="1.5" fill="#001080"/><rect x="63" y="732" width="3" height="1.5" fill="#a31515"/><rect x="67" y="732" width="3" height="1.5" fill="#267f99"/><rect x="16" y="734" width="6" height="1.5" fill="#a31515"/><rect x="23" y="734" width="2" height="1.5" fill="#001080"/><rect x="20" y="736" width="4" height="1.5" fill="#267f99"/><rect x="26" y="736" width="8" height="1.5" fill="#008000"/><rect x="35" y="736" width="2" height="1.5" fill="#267f99"/><rect x="12" y="738" width="4" height="1.5" fill="#001080"/><rect x="17" y="738" width="4" height="1.5" fill="#0000ff"/><rect x="12" y="740" width="5" height="1.5" fill="#795e26"/><rect x="19" y="740" width="3" height="1.5" fill="#008000"/><rect x="24" y="740" width="12" height="1.5" fill="#795e26"/><rect x="37" y="740" width="6" height="1.5" fill="#008000"/><rect x="45" y="740" width="3" height="1.5" fill="#001080"/><rect x="50" y="740" width="3" height="1.5" fill="#af00db"/><rect x="54" y="740" width="9" height="1.5" fill="#008000"/><rect x="64" y="740" width="9" height="1.5" fill="#267f99"/><rect x="75" y="740" width="5" height="1.5" fill="#0000ff"/><rect x="82" y="740" width="3" height="1.5" fill="#0000ff"/><rect x="86" y="740" width="5" height="1.5" fill="#a31515"/><rect x="92" y="740" width="12" height="1.5" fill="#001080"/><rect x="105" y="740" width="5" height="1.5" fill="#267f99"/><rect x="12" y="744" width="12" height="1.5" fill="#001080"/><rect x="25" y="744" width="7" height="1.5" fill="#af00db"/><rect x="33" y="744" width="10" height="1.5" fill="#001080"/><rect x="44" y="744" width="6" height="1.5" fill="#001080"/><rect x="52" y="744" width="11" height="1.5" fill="#af00db"/><rect x="64" y="744" width="5" height="1.5" fill="#333"/><rect x="70" y="744" width="4" height="1.5" fill="#af00db"/><rect x="12" y="746" width="8" height="1.5" fill="#a31515"/><rect x="8" y="754" width="12" height="1.5" fill="#267f99"/><rect x="21" y="754" width="11" height="1.5" fill="#a31515"/><rect x="34" y="754" width="5" height="1.5" fill="#af00db"/><rect x="40" y="754" width="1" height="1.5" fill="#001080"/><rect x="8" y="762" width="5" height="1.5" fill="#267f99"/><rect x="14" y="762" width="7" height="1.5" fill="#001080"/><rect x="23" y="762" width="4" height="1.5" fill="#267f99"/><rect x="29" y="762" width="7" height="1.5" fill="#a31515"/><rect x="16" y="764" width="5" height="1.5" fill="#a31515"/><rect x="22" y="764" width="10" height="1.5" fill="#001080"/><rect x="33" y="764" width="3" height="1.5" fill="#267f99"/><rect x="38" y="764" width="4" height="1.5" fill="#a31515"/><rect x="12" y="766" width="10" height="1.5" fill="#001080"/><rect x="23" y="766" width="5" height="1.5" fill="#0000ff"/><rect x="8" y="768" width="6" height="1.5" fill="#267f99"/><rect x="16" y="768" width="8" height="1.5" fill="#0000ff"/><rect x="20" y="776" width="9" height="1.5" fill="#795e26"/><rect x="20" y="780" width="7" height="1.5" fill="#0000ff"/><rect x="29" y="780" width="9" height="1.5" fill="#795e26"/><rect x="39" y="780" width="10" height="1.5" fill="#333"/><rect x="51" y="780" width="12" height="1.5" fill="#af00db"/><rect x="65" y="780" width="6" height="1.5" fill="#af00db"/><rect x="73" y="780" width="12" height="1.5" fill="#af00db"/><rect x="87" y="780" width="3" height="1.5" fill="#267f99"/><rect x="91" y="780" width="5" height="1.5" fill="#333"/><rect x="98" y="780" width="6" height="1.5" fill="#0000ff"/><rect x="16" y="788" width="10" height="1.5" fill="#0000ff"/><rect x="27" y="788" width="3" height="1.5" fill="#001080"/><rect x="31" y="788" width="6" height="1.5" fill="#001080"/><rect x="38" y="788" width="3" height="1.5" fill="#af00db"/><rect x="8" y="794" width="8" height="1.5" fill="#267f99"/><rect x="18" y="794" width="12" height="1.5" fill="#795e26"/><rect x="31" y="794" width="11" height="1.5" fill="#0000ff"/><rect x="43" y="794" width="10" height="1.5" fill="#a31515"/><rect x="8" y="796" width="7" height="1.5" fill="#008000"/><rect x="17" y="796" width="11" height="1.5" fill="#af00db"/><rect x="30" y="796" width="1" height="1.5" fill="#001080"/><rect x="16" y="800" width="7" height="1.5" fill="#001080"/><rect x="24" y="800" width="12" height="1.5" fill="#333"/><rect x="37" y="800" width="7" height="1.5" fill="#267f99"/><rect x="46" y="800" width="3" height="1.5" fill="#267f99"/><rect x="8" y="802" width="3" height="1.5" fill="#267f99"/><rect x="13" y="802" width="4" height="1.5" fill="#af00db"/><rect x="18" y="802" width="1" height="1.5" fill="#267f99"/><rect x="8" y="804" width="7" height="1.5" fill="#0000ff"/><rect x="16" y="804" width="6" height="1.5" fill="#001080"/><rect x="23" y="804" width="2" height="1.5" fill="#008000"/><rect x="16" y="810" width="5" height="1.5" fill="#795e26"/><rect x="22" y="810" width="10" height="1.5" fill="#af00db"/><rect x="34" y="810" width="3" height="1.5" fill="#a31515"/><rect x="38" y="810" width="7" height="1.5" fill="#af00db"/><rect x="8" y="812" width="8" height="1.5" fill="#008000"/><rect x="17" y="812" width="6" height="1.5" fill="#001080"/><rect x="25" y="812" width="5" height="1.5" fill="#008000"/><rect x="31" y="812" width="5" height="1.5" fill="#a31515"/><rect x="16" y="814" width="5" height="1.5" fill="#008000"/><rect x="23" y="814" width="5" height="1.5" fill="#0000ff"/><rect x="29" y="814" width="9" height="1.5" fill="#001080"/><rect x="40" y="814" width="6" height="1.5" fill="#af00db"/><rect x="48" y="814" width="11" height="1.5" fill="#333"/><rect x="60" y="814" width="6" height="1.5" fill="#af00db"/><rect x="68" y="814" width="11" height="1.5" fill="#0000ff"/><rect x="80" y="814" width="12" height="1.5" fill="#a31515"/><rect x="93" y="814" width="8" height="1.5" fill="#267f99"/><rect x="12" y="826" width="9" height="1.5" fill="#008000"/><rect x="23" y="826" width="10" height="1.5" fill="#0000ff"/><rect x="34" y="826" width="8" height="1.5" fill="#001080"/><rect x="43" y="826" width="3" height="1.5" fill="#795e26"/><rect x="16" y="830" width="12" height="1.5" fill="#267f99"/><rect x="29" y="830" width="6" height="1.5" fill="#0000ff"/><rect x="36" y="830" width="8" height="1.5" fill="#001080"/><rect x="46" y="830" width="2" height="1.5" fill="#0000ff"/><rect x="12" y="832" width="5" height="1.5" fill="#a31515"/><rect x="18" y="832" width="3" height="1.5" fill="#a31515"/><rect x="22" y="832" width="8" height="1.5" fill="#001080"/><rect x="31" y="832" width="7" height="1.5" fill="#267f99"/><rect x="40" y="832" width="1" height="1.5" fill="#af00db"/><rect x="16" y="840" width="8" height="1.5" fill="#008000"/><rect x="25" y="840" width="1" height="1.5" fill="#267f99"/><rect x="16" y="842" width="12" height="1.5" fill="#0000ff"/><rect x="29" y="842" width="6" height="1.5" fill="#001080"/><rect x="36" y="842" width="8" height="1.5" fill="#001080"/><rect x="16" y="844" width="10" height="1.5" fill="#008000"/><rect x="28" y="844" width="3" height="1.5" fill="#0000ff"/><rect x="12" y="848" width="12" height="1.5" fill="#001080"/><rect x="25" y="848" width="8" height="1.5" fill="#001080"/><rect x="34" y="848" width="10" height="1.5" fill="#001080"/><rect x="12" y="852" width="12" height="1.5" fill="#a31515"/><rect x="25" y="852" width="4" height="1.5" fill="#008000"/><rect x="12" y="858" width="9" height="1.5" fill="#333"/><rect x="23" y="858" width="12" height="1.5" fill="#008000"/><rect x="20" y="860" width="7" height="1.5" fill="#001080"/><rect x="28" y="860" width="5" height="1.5" fill="#008000"/><rect x="12" y="862" width="8" height="1.5" fill="#001080"/><rect x="21" y="862" width="9" height="1.5" fill="#001080"/><rect x="31" y="862" width="8" height="1.5" fill="#267f99"/><rect x="16" y="866" width="5" height="1.5" fill="#267f99"/><rect x="22" y="866" width="11" height="1.5" fill="#795e26"/><rect x="34" y="866" width="10" height="1.5" fill="#001080"/><rect x="12" y="870" width="12" height="1.5" fill="#333"/><rect x="8" y="878" width="5" height="1.5" fill="#008000"/><rect x="15" y="878" width="10" height="1.5" fill="#af00db"/><rect x="27" y="878" width="10" height="1.5" fill="#795e26"/><rect x="39" y="878" width="4" height="1.5" fill="#0000ff"/><rect x="44" y="878" width="9" height="1.5" fill="#795e26"/><rect x="54" y="878" width="1" height="1.5" fill="#008000"/><rect x="8" y="880" width="11" height="1.5" fill="#0000ff"/><rect x="20" y="880" width="10" height="1.5" fill="#001080"/><rect x="31" y="880" width="5" height="1.5" fill="#008000"/><rect x="16" y="882" width="5" height="1.5" fill="#af00db"/><rect x="22" y="882" width="11" height="1.5" fill="#267f99"/><rect x="35" y="882" width="8" height="1.5" fill="#001080"/><rect x="45" y="882" width="4" height="1.5" fill="#267f99"/><rect x="51" y="882" width="6" height="1.5" fill="#0000ff"/><rect x="58" y="882" width="4" height="1.5" fill="#0000ff"/><rect x="63" y="882" width="6" height="1.5" fill="#001080"/><rect x="8" y="884" width="12" height="1.5" fill="#267f99"/><rect x="21" y="884" width="5" height="1.5" fill="#af00db"/><rect x="27" y="884" width="8" height="1.5" fill="#001080"/><rect x="36" y="884" width="6" height="1.5" fill="#af00db"/><rect x="8" y="886" width="8" height="1.5" fill="#008000"/><rect x="17" y="886" width="7" height="1.5" fill="#001080"/><rect x="25" y="886" width="3" height="1.5" fill="#0000ff"/><rect x="8" y="888" width="7" height="1.5" fill="#0000ff"/><rect x="17" y="888" width="4" height="1.5" fill="#af00db"/><rect x="22" y="888" width="6" height="1.5" fill="#795e26"/><rect x="29" y="888" width="10" height="1.5" fill="#a31515"/><rect x="40" y="888" width="4" height="1.5" fill="#0000ff"/><rect x="45" y="888" width="4" height="1.5" fill="#267f99"/><rect x="51" y="888" width="3" height="1.5" fill="#001080"/><rect x="55" y="888" width="7" height="1.5" fill="#a31515"/><rect x="63" y="888" width="9" height="1.5" fill="#001080"/><rect x="12" y="890" width="9" height="1.5" fill="#0000ff"/><rect x="22" y="890" width="5" height="1.5" fill="#008000"/><rect x="8" y="892" width="7" height="1.5" fill="#267f99"/><rect x="17" y="892" width="11" height="1.5" fill="#a31515"/><rect x="29" y="892" width="3" height="1.5" fill="#008000"/><rect x="12" y="904" width="5" height="1.5" fill="#001080"/><rect x="18" y="904" width="3" height="1.5" fill="#008000"/><rect x="23" y="904" width="3" height="1.5" fill="#001080"/><rect x="27" y="904" width="2" height="1.5" fill="#008000"/><rect x="12" y="906" width="11" height="1.5" fill="#008000"/><rect x="24" y="906" width="8" height="1.5" fill="#267f99"/><rect x="20" y="908" width="5" height="1.5" fill="#a31515"/><rect x="26" y="908" width="11" height="1.5" fill="#333"/><rect x="39" y="908" width="3" height="1.5" fill="#333"/><rect x="44" y="908" width="11" height="1.5" fill="#001080"/><rect x="57" y="908" width="10" height="1.5" fill="#af00db"/><rect x="68" y="908" width="3" height="1.5" fill="#af00db"/><rect x="73" y="908" width="5" height="1.5" fill="#af00db"/><rect x="16" y="912" width="9" height="1.5" fill="#a31515"/><rect x="26" y="912" width="5" height="1.5" fill="#008000"/><rect x="16" y="914" width="4" height="1.5" fill="#001080"/><rect x="21" y="914" width="10" height="1.5" fill="#795e26"/><rect x="32" y="914" width="5" height="1.5" fill="#001080"/><rect x="39" y="914" width="9" height="1.5" fill="#008000"/><rect x="49" y="914" width="10" height="1.5" fill="#af00db"/><rect x="60" y="914" width="11" height="1.5" fill="#333"/><rect x="72" y="914" width="5" height="1.5" fill="#0000ff"/><rect x="78" y="914" width="9" height="1.5" fill="#333"/><rect x="88" y="914" width="11" height="1.5" fill="#267f99"/><rect x="100" y="914" width="9" height="1.5" fill="#a31515"/><rect x="16" y="916" width="6" height="1.5" fill="#008000"/><rect x="24" y="916" width="7" height="1.5" fill="#0000ff"/><rect x="12" y="918" width="4" height="1.5" fill="#795e26"/><rect x="18" y="918" width="3" height="1.5" fill="#795e26"/><rect x="22" y="918" width="2" height="1.5" fill="#001080"/><rect x="20" y="924" width="8" height="1.5" fill="#333"/><rect x="29" y="924" width="3" height="1.5" fill="#0000ff"/><rect x="12" y="926" width="5" height="1.5" fill="#795e26"/><rect x="19" y="926" width="4" height="1.5" fill="#001080"/><rect x="25" y="926" width="1" height="1.5" fill="#0000ff"/><rect x="20" y="928" width="3" height="1.5" fill="#267f99"/><rect x="24" y="928" width="11" height="1.5" fill="#008000"/><rect x="36" y="928" width="12" height="1.5" fill="#008000"/><rect x="50" y="928" width="6" height="1.5" fill="#0000ff"/><rect x="58" y="928" width="9" height="1.5" fill="#0000ff"/><rect x="68" y="928" width="4" height="1.5" fill="#267f99"/><rect x="74" y="928" width="9" height="1.5" fill="#008000"/><rect x="16" y="932" width="3" height="1.5" fill="#267f99"/><rect x="20" y="932" width="6" height="1.5" fill="#af00db"/><rect x="27" y="932" width="2" height="1.5" fill="#af00db"/><rect x="20" y="934" width="5" height="1.5" fill="#a31515"/><rect x="27" y="934" width="5" height="1.5" fill="#0000ff"/><rect x="33" y="934" width="8" height="1.5" fill="#001080"/><rect x="42" y="934" width="3" height="1.5" fill="#333"/><rect x="46" y="934" width="10" height="1.5" fill="#008000"/><rect x="57" y="934" width="10" height="1.5" fill="#008000"/><rect x="68" y="934" width="6" height="1.5" fill="#af00db"/><rect x="12" y="936" width="8" height="1.5" fill="#008000"/><rect x="21" y="936" width="12" height="1.5" fill="#795e26"/><rect x="34" y="936" width="12" height="1.5" fill="#795e26"/><rect x="20" y="938" width="8" height="1.5" fill="#0000ff"/><rect x="12" y="942" width="4" height="1.5" fill="#a31515"/><rect x="18" y="942" width="9" height="1.5" fill="#001080"/><rect x="28" y="942" width="12" height="1.5" fill="#333"/><rect x="41" y="942" width="1" height="1.5" fill="#001080"/><rect x="20" y="944" width="7" height="1.5" fill="#795e26"/><rect x="28" y="944" width="3" height="1.5" fill="#333"/><rect x="32" y="944" width="9" height="1.5" fill="#a31515"/><rect x="42" y="944" width="2" height="1.5" fill="#333"/><rect x="16" y="946" width="8" height="1.5" fill="#a31515"/><rect x="26" y="946" width="11" height="1.5" fill="#af00db"/><rect x="12" y="948" width="4" height="1.5" fill="#333"/><rect x="18" y="948" width="5" height="1.5" fill="#001080"/><rect x="25" y="948" width="2" height="1.5" fill="#008000"/><rect x="12" y="954" width="4" height="1.5" fill="#001080"/><rect x="17" y="954" width="4" height="1.5" fill="#795e26"/><rect x="22" y="954" width="7" height="1.5" fill="#008000"/><rect x="31" y="954" width="9" height="1.5" fill="#0000ff"/><rect x="42" y="954" width="11" height="1.5" fill="#795e26"/><rect x="55" y="954" width="7" height="1.5" fill="#0000ff"/><rect x="63" y="954" width="12" height="1.5" fill="#001080"/><rect x="76" y="954" width="4" height="1.5" fill="#333"/><rect x="82" y="954" width="5" height="1.5" fill="#795e26"/><rect x="89" y="954" width="7" height="1.5" fill="#001080"/><rect x="20" y="958" width="10" height="1.5" fill="#001080"/><rect x="31" y="958" width="7" height="1.5" fill="#001080"/><rect x="40" y="958" width="2" height="1.5" fill="#001080"/><rect x="12" y="960" width="9" height="1.5" fill="#0000ff"/><rect x="23" y="960" width="2" height="1.5" fill="#af00db"/><rect x="12" y="962" width="7" height="1.5" fill="#0000ff"/><rect x="20" y="962" width="9" height="1.5" fill="#0000ff"/><rect x="30" y="962" width="6" height="1.5" fill="#001080"/><rect x="37" y="962" width="4" height="1.5" fill="#008000"/><rect x="42" y="962" width="10" height="1.5" fill="#af00db"/><rect x="53" y="962" width="12" height="1.5" fill="#0000ff"/><rect x="67" y="962" width="2" height="1.5" fill="#a31515"/><rect x="12" y="964" width="5" height="1.5" fill="#008000"/><rect x="19" y="964" width="1" height="1.5" fill="#267f99"/><rect x="12" y="966" width="11" height="1.5" fill="#267f99"/><rect x="24" y="966" width="2" height="1.5" fill="#001080"/><rect x="8" y="974" width="6" height="1.5" fill="#795e26"/><rect x="15" y="974" width="5" height="1.5" fill="#333"/><rect x="21" y="974" width="4" height="1.5" fill="#795e26"/><rect x="27" y="974" width="10" height="1.5" fill="#001080"/><rect x="38" y="974" width="4" height="1.5" fill="#001080"/><rect x="8" y="976" width="4" height="1.5" fill="#0000ff"/><rect x="13" y="976" width="6" height="1.5" fill="#267f99"/><rect x="20" y="976" width="7" height="1.5" fill="#795e26"/><rect x="12" y="986" width="12" height="1.5" fill="#267f99"/><rect x="25" y="986" width="3" height="1.5" fill="#333"/><rect x="30" y="986" width="9" height="1.5" fill="#333"/><rect x="40" y="986" width="10" height="1.5" fill="#af00db"/><rect x="52" y="986" width="2" height="1.5" fill="#795e26"/><rect x="8" y="990" width="10" height="1.5" fill="#0000ff"/><rect x="12" y="992" width="10" height="1.5" fill="#267f99"/><rect x="23" y="992" width="5" height="1.5" fill="#001080"/><rect x="30" y="992" width="10" height="1.5" fill="#333"/><rect x="8" y="996" width="10" height="1.5" fill="#267f99"/><rect x="19" y="996" width="3" height="1.5" fill="#af00db"/><rect x="23" y="996" width="5" height="1.5" fill="#001080"/><rect x="30" y="996" width="7" height="1.5" fill="#af00db"/><rect x="39" y="996" width="7" height="1.5" fill="#008000"/><rect x="47" y="996" width="9" height="1.5" fill="#008000"/><rect x="58" y="996" width="3" height="1.5" fill="#af00db"/><rect x="16" y="998" width="10" height="1.5" fill="#795e26"/><rect x="27" y="998" width="2" height="1.5" fill="#795e26"/><rect x="12" y="1000" width="7" height="1.5" fill="#a31515"/><rect x="20" y="1000" width="4" height="1.5" fill="#795e26"/><rect x="12" y="1002" width="12" height="1.5" fill="#333"/><rect x="26" y="1002" width="5" height="1.5" fill="#333"/><rect x="33" y="1002" width="8" height="1.5" fill="#001080"/><rect x="8" y="1004" width="6" height="1.5" fill="#001080"/><rect x="15" y="1004" width="10" height="1.5" fill="#333"/><rect x="26" y="1004" width="3" height="1.5" fill="#001080"/><rect x="16" y="1012" width="11" height="1.5" fill="#001080"/><rect x="8" y="1014" width="10" height="1.5" fill="#001080"/><rect x="8" y="1016" width="12" height="1.5" fill="#333"/><rect x="21" y="1016" width="3" height="1.5" fill="#795e26"/><rect x="25" y="1016" width="9" height="1.5" fill="#001080"/><rect x="36" y="1016" width="5" height="1.5" fill="#001080"/><rect x="42" y="1016" width="5" height="1.5" fill="#001080"/><rect x="48" y="1016" width="11" height="1.5" fill="#0000ff"/><rect x="60" y="1016" width="2" height="1.5" fill="#795e26"/><rect x="8" y="1018" width="9" height="1.5" fill="#af00db"/><rect x="8" y="1022" width="11" height="1.5" fill="#a31515"/><rect x="21" y="1022" width="1" height="1.5" fill="#333"/><rect x="8" y="1024" width="6" height="1.5" fill="#333"/><rect x="15" y="1024" width="5" height="1.5" fill="#333"/><rect x="22" y="1024" width="3" height="1.5" fill="#a31515"/><rect x="27" y="1024" width="3" height="1.5" fill="#a31515"/><rect x="32" y="1024" width="4" height="1.5" fill="#001080"/><rect x="38" y="1024" width="3" height="1.5" fill="#795e26"/><rect x="12" y="1030" width="5" height="1.5" fill="#795e26"/><rect x="19" y="1030" width="6" height="1.5" fill="#0000ff"/><rect x="26" y="1030" width="9" height="1.5" fill="#a31515"/><rect x="36" y="1030" width="9" height="1.5" fill="#af00db"/><rect x="20" y="1032" width="4" height="1.5" fill="#267f99"/><rect x="25" y="1032" width="11" height="1.5" fill="#a31515"/><rect x="38" y="1032" width="1" height="1.5" fill="#333"/><rect x="16" y="1034" width="6" height="1.5" fill="#a31515"/><rect x="23" y="1034" width="12" height="1.5" fill="#008000"/><rect x="36" y="1034" width="4" height="1.5" fill="#a31515"/><rect x="41" y="1034" width="2" height="1.5" fill="#267f99"/><rect x="16" y="1036" width="12" height="1.5" fill="#001080"/><rect x="30" y="1036" width="6" height="1.5" fill="#a31515"/><rect x="37" y="1036" width="3" height="1.5" fill="#795e26"/><rect x="42" y="1036" width="4" height="1.5" fill="#af00db"/><rect x="48" y="1036" width="1" height="1.5" fill="#008000"/><rect x="12" y="1044" width="7" height="1.5" fill="#001080"/><rect x="21" y="1044" width="5" height="1.5" fill="#a31515"/><rect x="8" y="1046" width="9" height="1.5" fill="#008000"/><rect x="19" y="1046" width="8" height="1.5" fill="#af00db"/><rect x="12" y="1048" width="12" height="1.5" fill="#af00db"/><rect x="25" y="1048" width="5" height="1.5" fill="#001080"/></svg><div id="sticky"><div class="sh" style="left:0;top:0;width:100%;height:38px"><div class="ln" style="top:2px"><span class="no">38</span><span class="tx"><i class="k">class</i> <i class="l">GodController</i> <i class="k">extends</i> <i class="l">Controller</i></span></div><div class="ln" style="top:21px"><span class="no">2239</span><span class="tx">    <i class="k">public</i> <i class="k">function</i> <i class="f">carga_error_general</i>(<i class="l">Request</i> <i class="v">$request</i>)</span></div></div></div><div style="left:1375px;top:0;width:14px;height:1053px;border-left:1px solid #f1f1f1;background:#fff"></div></div>
<div id="status"><div id="remote"><svg style="left:10px;top:5px" width="13" height="13" viewBox="0 0 16 16" fill="none" stroke="#fff" stroke-width="1.5"><path d="M2 5.500l3.500 3-3.500 3M14 4.500l-3.500 3 3.500 3"/></svg></div><svg style="left:40px;top:4px" width="14" height="14" viewBox="0 0 16 16" fill="none" stroke="#fff" stroke-width="1.2"><circle cx="4" cy="3" r="1.800"/><circle cx="4" cy="13" r="1.800"/><circle cx="12" cy="5" r="1.800"/><path d="M4 4.800v6.400M12 6.800c0 3.500-8 2-8 4.500"/></svg><span style="left:57px">main</span><svg style="left:91px;top:4px" width="14" height="14" viewBox="0 0 16 16" fill="none" stroke="#fff" stroke-width="1.2"><path d="M13 8a5 5 0 0 1-9 3M3 8a5 5 0 0 1 9-3M12.500 2v3h-3M3.500 14v-3h3"/></svg><svg style="left:120px;top:4px" width="14" height="14" viewBox="0 0 16 16" fill="none" stroke="#fff" stroke-width="1.2"><circle cx="8" cy="8" r="6.300"/><path d="M5.500 5.500l5 5M10.500 5.500l-5 5"/></svg><span style="left:137px">0</span><svg style="left:146px;top:4px" width="14" height="14" viewBox="0 0 16 16" fill="none" stroke="#fff" stroke-width="1.2"><path d="M8 2l6.500 11.500h-13zM8 6.500v3.500M8 11.300v1"/></svg><span style="left:163px">0</span><svg style="left:1165px;top:4px" width="14" height="14" viewBox="0 0 16 16" fill="none" stroke="#fff" stroke-width="1.2"><circle cx="8" cy="8" r="2.500"/><path d="M8 1v4.500M8 10.500V15"/></svg><span style="left:1185px">David Cañon (4 months ago)</span><span style="left:1353px">Ln 3405, Col 116 (4 selected)</span><span style="left:1522px">Spaces: 4</span><span style="left:1589px">UTF-8</span><span style="left:1634px">LF</span><span style="left:1659px">{}</span><span style="left:1678px">PHP</span><svg style="left:1719px;top:4px" width="16" height="14" viewBox="0 0 16 16" fill="none" stroke="#fff" stroke-width="1.2"><path d="M3 3h4v3H3zM9 3h4v3H9zM2 7h12v4l-2.500 2h-7L2 11z"/></svg><svg style="left:1749px;top:4px" width="14" height="14" viewBox="0 0 16 16" fill="none" stroke="#fff" stroke-width="1.2"><circle cx="8" cy="8" r="2"/><path d="M4.500 11.500a5 5 0 0 1 0-7M11.500 4.500a5 5 0 0 1 0 7M2.500 13.500a8 8 0 0 1 0-11M13.500 2.500a8 8 0 0 1 0 11"/></svg><span style="left:1768px">Go Live</span><svg style="left:1823px;top:4px" width="14" height="14" viewBox="0 0 16 16" fill="none" stroke="#fff" stroke-width="1.2"><path d="M8 2a4 4 0 0 0-4 4v3l-1.500 2.500h11L12 9V6a4 4 0 0 0-4-4zM6.500 13.500h3"/></svg></div>
</div>
</body></html>
